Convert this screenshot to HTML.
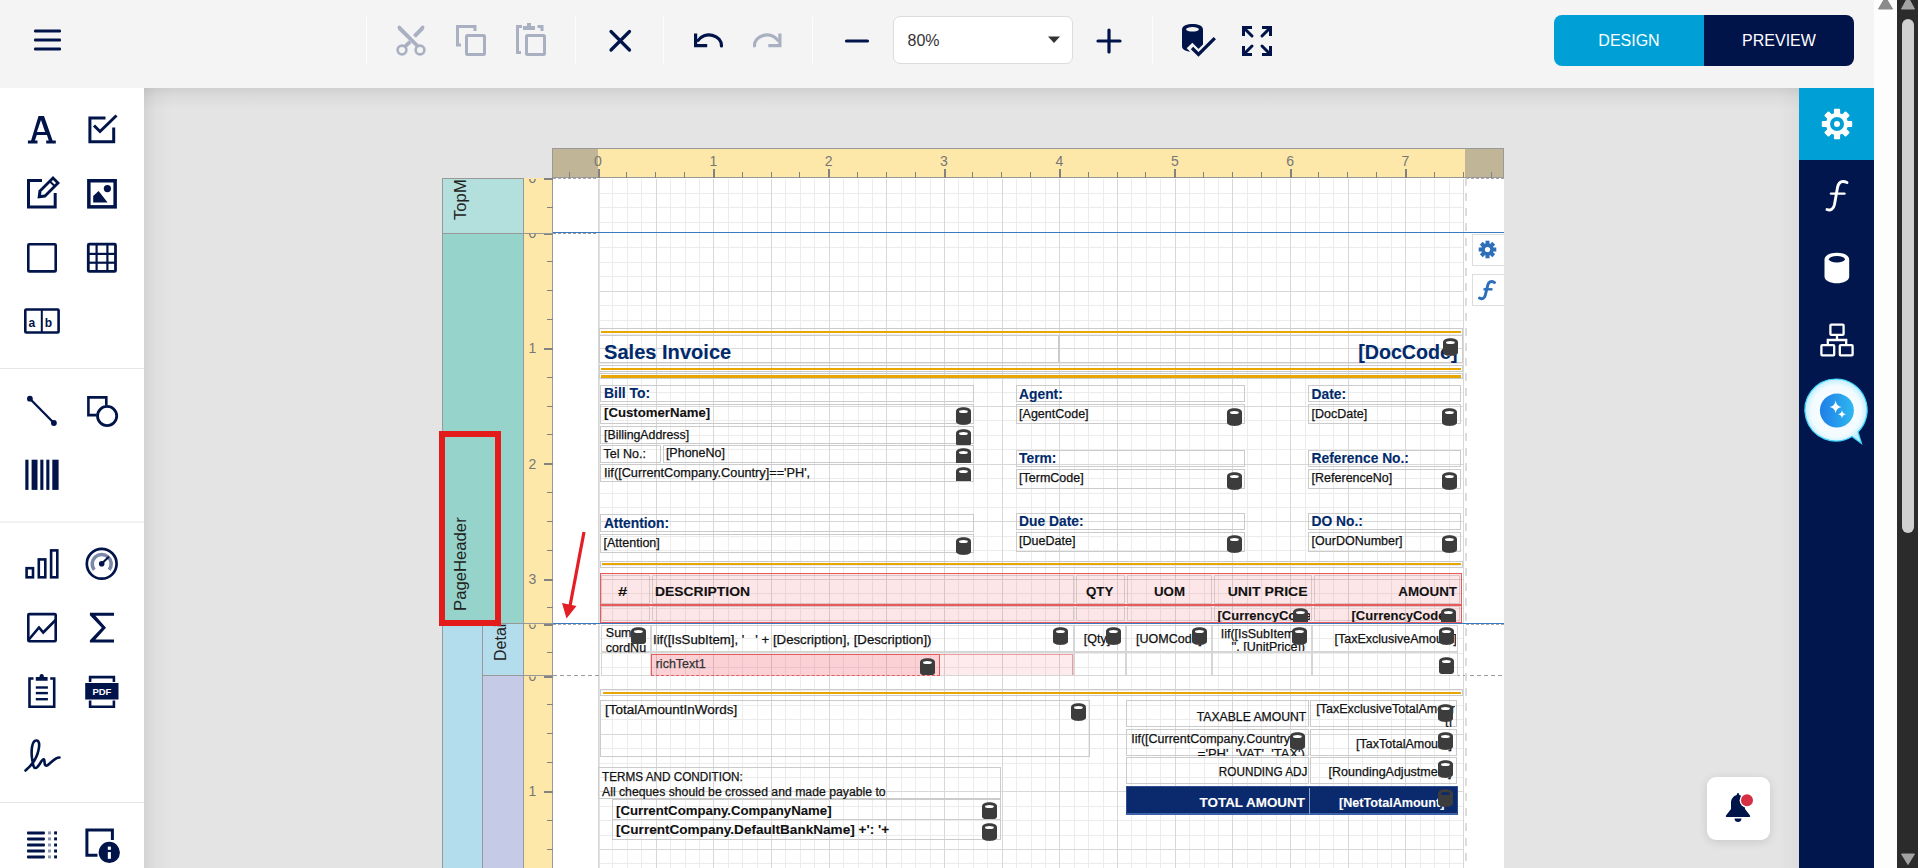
<!DOCTYPE html>
<html><head><meta charset="utf-8">
<style>
*{box-sizing:border-box;margin:0;padding:0}
html,body{width:1918px;height:868px;overflow:hidden;background:#e4e4e4;font-family:"Liberation Sans",sans-serif}
.a{position:absolute}
#tb{left:0;top:0;width:1874px;height:88px;background:#f4f4f4}
#lp{left:0;top:88px;width:144px;height:780px;background:#fff}
#cv{left:144px;top:88px;width:1655px;height:780px;background:#e4e4e4;overflow:hidden}
#rs{left:1799px;top:88px;width:75px;height:780px;background:#00164d}
#sb1{left:1874px;top:0;width:23px;height:868px;background:#fdfdfd}
#sb2{left:1897px;top:0;width:21px;height:868px;background:#2b2b2b}
</style></head><body>
<!-- TOOLBAR -->
<div id="tb" class="a">
 <svg class="a" style="left:0;top:0" width="1874" height="88" viewBox="0 0 1874 88">
  <g fill="#00144a">
   <rect x="34" y="29.5" width="27" height="3" rx="1.2"/>
   <rect x="34" y="38.5" width="27" height="3" rx="1.2"/>
   <rect x="34" y="47.5" width="27" height="3" rx="1.2"/>
  </g>
  <g fill="#fdfdfd">
   <rect x="366" y="17" width="1" height="48"/>
   <rect x="575" y="17" width="1" height="48"/>
   <rect x="663" y="17" width="1" height="48"/>
   <rect x="812" y="17" width="1" height="48"/>
   <rect x="1152" y="17" width="1" height="48"/>
  </g>
  <!-- scissors -->
  <g fill="#a9b0c2">
   <path d="M397.6 26.8 Q398.6 24.8 400.6 26.2 L418.6 44.4 L416 47 L399 30.6 Q397.3 28.8 397.6 26.8 Z"/>
   <path d="M424.4 26.8 Q423.4 24.8 421.4 26.2 L413 34.9 L415.8 37.7 L423 30.6 Q424.7 28.8 424.4 26.8 Z"/>
   <path d="M408.9 40.2 L411.6 42.9 L405.6 48.6 L402.8 45.9 Z"/>
  </g>
  <g stroke="#a9b0c2" stroke-width="2.6" fill="none">
   <circle cx="402" cy="50" r="4.4"/>
   <circle cx="420" cy="50" r="4.4"/>
  </g>
  <!-- copy -->
  <g stroke="#a9b0c2" stroke-width="3" fill="none">
   <path d="M461 45 L457.5 45 L457.5 26.5 L475 26.5 L475 31"/>
   <rect x="466.5" y="35.5" width="18" height="19" rx="1"/>
  </g>
  <!-- paste -->
  <g stroke="#a9b0c2" stroke-width="3" fill="none">
   <path d="M521 52.5 L517.5 52.5 L517.5 26.5 L522 26.5"/>
   <path d="M537.5 26.5 L542 26.5 L542 31"/>
   <rect x="526.5" y="35.5" width="18" height="19" rx="1"/>
  </g>
  <g fill="#a9b0c2"><rect x="523" y="26" width="12" height="4"/><rect x="527" y="23" width="4" height="4"/></g>
  <!-- X -->
  <g stroke="#00144a" stroke-width="3.2" stroke-linecap="round">
   <path d="M611 31.5 L629.5 50 M629.5 31.5 L611 50"/>
  </g>
  <!-- undo -->
  <g stroke="#00144a" stroke-width="3.2" fill="none" stroke-linecap="round">
   <path d="M721.5 46 A12.5 10.5 0 0 0 698 40.5"/>
  </g>
  <g fill="#00144a"><path d="M694 33.5 h3.2 v10.5 h10 v3.3 h-13.2 z"/></g>
  <!-- redo -->
  <g stroke="#a9b0c2" stroke-width="3.2" fill="none" stroke-linecap="round">
   <path d="M754.5 46 A12.5 10.5 0 0 1 778 40.5"/>
  </g>
  <g fill="#a9b0c2"><path d="M781.5 33.5 h-3.2 v10.5 h-10 v3.3 h13.2 z"/></g>
  <!-- minus / plus -->
  <g stroke="#00144a" stroke-width="3.2" stroke-linecap="round">
   <path d="M846.5 41 H867.5"/>
   <path d="M1098 41 H1120 M1109 30 V52"/>
  </g>
  <!-- db check -->
  <path fill="#00144a" d="M1182 29.5 C1182 22.3 1203 22.3 1203 29.5 V46.5 C1203 53.5 1182 53.5 1182 46.5 Z"/>
  <ellipse cx="1192.5" cy="29.3" rx="6.4" ry="2.3" fill="#f4f4f4"/>
  <path d="M1189.5 45.5 L1198.5 54.5 L1216 37" stroke="#f4f4f4" stroke-width="8" fill="none"/>
  <path d="M1192 48 L1198.5 54.5 L1214.8 38.2" stroke="#00144a" stroke-width="3.3" fill="none"/>
  <!-- fullscreen -->
  <g fill="#00144a">
   <path d="M1242 26 h10 v3 h-7 v7 h-3 z"/><path d="M1272 26 h-10 v3 h7 v7 h3 z"/>
   <path d="M1242 56 h10 v-3 h-7 v-7 h-3 z"/><path d="M1272 56 h-10 v-3 h7 v-7 h3 z"/>
  </g>
  <g stroke="#00144a" stroke-width="3" stroke-linecap="round">
   <path d="M1245 29 L1252 36 M1269 29 L1262 36 M1245 53 L1252 46 M1269 53 L1262 46"/>
  </g>
 </svg>
 <div class="a" style="left:893px;top:16px;width:180px;height:48px;background:#fff;border:1px solid #dcdcdc;border-radius:7px"></div>
 <div class="a" style="left:907.5px;top:32px;font-size:16px;color:#333;line-height:18px">80%</div>
 <svg class="a" style="left:1047px;top:36px" width="14" height="8"><path d="M1 0.5 L13 0.5 L7 7 Z" fill="#333"/></svg>
 <div class="a" style="left:1554px;top:15px;width:150px;height:51px;background:#00a0d7;border-radius:8px 0 0 8px;color:#fff;font-size:16px;line-height:51px;text-align:center">DESIGN</div>
 <div class="a" style="left:1704px;top:15px;width:150px;height:51px;background:#00144a;border-radius:0 8px 8px 0;color:#fff;font-size:16px;line-height:51px;text-align:center">PREVIEW</div>
</div>
<!-- LEFT PANEL -->
<div id="lp" class="a">
<svg class="a" style="left:0;top:0" width="144" height="780" viewBox="0 88 144 780">
 <g fill="#e6e6e6"><rect x="0" y="368" width="144" height="1"/><rect x="0" y="521.5" width="144" height="1"/><rect x="0" y="802" width="144" height="1"/></g>
 <!-- A serif -->
 <path fill="#00144a" d="M38.5 116 h5.5 l8.6 24.6 h3.2 v2.8 h-9.6 v-2.8 h2.6 l-1.9 -5.6 h-10.1 l-1.9 5.6 h2.6 v2.8 h-9.6 v-2.8 h3.2 z M36.9 132.1 h8.2 l-4.1 -12.2 z"/>
 <!-- checkbox -->
 <g fill="none" stroke="#00144a" stroke-width="3">
  <path d="M105.5 117.9 H89.9 V141.8 H113.7 V127.5"/>
  <path d="M94 125.5 L100 131.5 L116.5 115.5"/>
 </g>
 <!-- edit -->
 <g fill="none" stroke="#00144a" stroke-width="3">
  <path d="M42 180.5 H28.5 V207.1 H55.2 V193"/>
 </g>
 <path fill="#00144a" d="M53 176 L60 183 L45.5 197.5 L37.5 198.5 L38.5 190.5 Z"/>
 <path fill="#fff" d="M53 180 L56 183 L44.5 194.5 L41 195 L41.5 191.5 Z"/>
 <path fill="#00144a" d="M51 181 L55 185 L53.6 186.4 L49.6 182.4 Z"/>
 <!-- image -->
 <rect x="88.85" y="180.75" width="26.3" height="26.1" fill="none" stroke="#00144a" stroke-width="3.5"/>
 <circle cx="107.4" cy="188.6" r="3.6" fill="#00144a"/>
 <path fill="#00144a" d="M93.2 196 L98.6 191 L107.6 202.6 L93.2 202.6 Z"/>
 <!-- rect -->
 <rect x="28.3" y="244.2" width="27.4" height="27.2" rx="1" fill="none" stroke="#00144a" stroke-width="2.6"/>
 <!-- table -->
 <rect x="88.3" y="244.2" width="27.2" height="27.2" rx="1" fill="none" stroke="#00144a" stroke-width="2.8"/>
 <g fill="#00144a"><rect x="95.5" y="244" width="2.2" height="28"/><rect x="106.3" y="244" width="2.2" height="28"/><rect x="88" y="252.8" width="28" height="2.2"/><rect x="88" y="261.6" width="28" height="2.2"/></g>
 <!-- ab -->
 <rect x="25.3" y="309.5" width="33.3" height="23" rx="1" fill="none" stroke="#00144a" stroke-width="2.6"/>
 <rect x="40.8" y="309" width="2" height="24" fill="#00144a"/>
 <text x="28.6" y="326.5" font-size="12" font-weight="bold" fill="#00144a" font-family="Liberation Sans">a</text>
 <text x="44.8" y="326.5" font-size="12" font-weight="bold" fill="#00144a" font-family="Liberation Sans">b</text>
 <!-- line -->
 <path d="M29.9 398.7 L53.9 423" stroke="#00144a" stroke-width="2.3"/>
 <circle cx="29.9" cy="398.7" r="2.9" fill="#00144a"/><circle cx="53.9" cy="423" r="2.9" fill="#00144a"/>
 <!-- shape -->
 <path d="M96.5 415.1 H88.4 V397.4 H106.3 V405" fill="none" stroke="#00144a" stroke-width="2.6"/>
 <circle cx="107.1" cy="416" r="9.6" fill="none" stroke="#00144a" stroke-width="2.8"/>
 <!-- barcode -->
 <g fill="#00144a"><rect x="25.3" y="459.7" width="3.2" height="30.2"/><rect x="31.6" y="459.7" width="5.9" height="30.2"/><rect x="40.3" y="459.7" width="3.1" height="30.2"/><rect x="46.3" y="459.7" width="3.1" height="30.2"/><rect x="52.3" y="459.7" width="6.3" height="30.2"/></g>
 <!-- chart -->
 <g fill="none" stroke="#00144a" stroke-width="2.6">
  <rect x="26.6" y="568.2" width="6.4" height="9.1"/>
  <rect x="38.8" y="559.4" width="6.5" height="17.9"/>
  <rect x="51.1" y="550.4" width="6.2" height="26.9"/>
 </g>
 <!-- gauge -->
 <circle cx="101.7" cy="563.8" r="14.9" fill="none" stroke="#00144a" stroke-width="2.7"/>
 <path d="M94.2 569.8 A9.5 9.5 0 1 1 109.2 569.8" fill="none" stroke="#7b88a8" stroke-width="3.6"/>
 <path d="M101.7 563.8 L108.8 556.7" stroke="#00144a" stroke-width="2"/>
 <circle cx="101.7" cy="563.8" r="2.8" fill="#00144a"/>
 <!-- sparkline -->
 <rect x="28.3" y="614.1" width="27.4" height="27.2" rx="1" fill="none" stroke="#00144a" stroke-width="2.6"/>
 <path d="M28.5 640 L39 627.5 L43.2 632.5 L55.6 620" fill="none" stroke="#00144a" stroke-width="2.6"/>
 <!-- sigma -->
 <path fill="#00144a" d="M89.9 612.8 H114 V615.8 H95.4 L106 627.7 L95.4 639.6 H114 V642.6 H89.9 V640.2 L101.8 627.7 L89.9 615.2 Z"/>
 <!-- clipboard -->
 <path d="M33.5 678.5 H29.5 V706.8 H54.2 V678.5 H50.2" fill="none" stroke="#00144a" stroke-width="2.6"/>
 <path fill="#00144a" d="M35.8 677 H39.5 Q39.5 674 41.7 674 Q43.9 674 43.9 677 H47.6 V680.8 H35.8 Z"/>
 <g fill="#00144a"><rect x="35.8" y="686.3" width="12.1" height="2.4"/><rect x="35.8" y="691.9" width="12.1" height="2.4"/><rect x="35.8" y="698" width="12.1" height="2.4"/></g>
 <!-- pdf -->
 <g fill="none" stroke="#00144a" stroke-width="2.6">
  <path d="M90.1 682 V677.1 H113.9 V682"/>
  <path d="M90.1 700.6 V706.7 H113.9 V700.6"/>
 </g>
 <rect x="85.2" y="683" width="33.3" height="16.5" fill="#00144a"/>
 <text x="101.9" y="695.4" font-size="9.5" font-weight="bold" fill="#fff" text-anchor="middle" font-family="Liberation Sans">PDF</text>
 <!-- signature -->
 <path d="M25.5 770.5 C32 765 37 758 38.5 750 C40 744 39 740 36 740.5 C32 741 31 750 32 758 C33 764 33 768 35.5 768 C38 768 40 763 42 760.5 C43.5 758.5 44.5 759 44.5 761.5 C44.5 764.5 45 766 47 765.5 C50 764.5 54 757.5 59.5 757.5" fill="none" stroke="#00144a" stroke-width="2.6" stroke-linecap="round"/>
 <!-- list -->
 <g fill="#00144a"><rect x="27" y="831.4" width="17.9" height="3" rx="0.8"/><rect x="27" y="837.4" width="17.9" height="3" rx="0.8"/><rect x="27" y="843.5" width="17.9" height="3" rx="0.8"/><rect x="27" y="849.5" width="17.9" height="3" rx="0.8"/><rect x="27" y="855.4" width="17.9" height="3" rx="0.8"/>
  <rect x="54.1" y="831.4" width="2.9" height="3"/><rect x="54.1" y="837.4" width="2.9" height="3"/><rect x="54.1" y="843.5" width="2.9" height="3"/><rect x="54.1" y="849.5" width="2.9" height="3"/><rect x="54.1" y="855.4" width="2.9" height="3"/></g>
 <g fill="#8f98b3"><rect x="48" y="831.4" width="3" height="3"/><rect x="48" y="837.4" width="3" height="3"/><rect x="48" y="843.5" width="3" height="3"/><rect x="48" y="849.5" width="3" height="3"/><rect x="48" y="855.4" width="3" height="3"/></g>
 <!-- info report -->
 <path d="M97.5 855.3 H86.9 V829.9 H112.4 V840" fill="none" stroke="#00144a" stroke-width="3"/>
 <circle cx="109.3" cy="852.4" r="10.6" fill="#00144a"/>
 <rect x="107.8" y="846.6" width="3.1" height="3.2" fill="#fff"/><rect x="107.8" y="852.1" width="3.1" height="6.7" fill="#fff"/>
</svg>
</div>
<div id="cv" class="a"></div>
<div class="a" style="left:144px;top:88px;width:1655px;height:22px;background:linear-gradient(to bottom,rgba(0,0,0,.085),rgba(0,0,0,.03) 45%,rgba(0,0,0,0))"></div><div class="a" style="left:144px;top:88px;width:28px;height:780px;background:linear-gradient(to right,rgba(0,0,0,.075),rgba(0,0,0,.025) 40%,rgba(0,0,0,0))"></div><div class="a" style="left:1779px;top:88px;width:20px;height:780px;background:linear-gradient(to left,rgba(0,0,0,.03),rgba(0,0,0,0))"></div>
<svg class="a" style="left:0;top:0" width="1918" height="868" viewBox="0 0 1918 868" shape-rendering="crispEdges">
<rect x="442.5" y="178.5" width="81" height="700" fill="#b3dcec" stroke="#999" stroke-width="1"/>
<rect x="443" y="178.5" width="80" height="54.5" fill="#b3e0dc"/>
<rect x="443" y="233" width="80" height="391" fill="#96d3ca"/>
<rect x="483" y="624" width="40" height="52" fill="#b3dcec"/>
<rect x="483" y="676" width="40" height="200" fill="#c5cae6"/>
<path d="M443 233.5 H523 M443 623.5 H523 M483 675.5 H523" stroke="#999" stroke-width="1"/>
<path d="M482.5 624 V868 M523.5 178 V868" stroke="#999" stroke-width="1"/>
<rect x="524" y="178" width="29" height="690" fill="#fde7a9"/>
<path d="M552.5 178 V868" stroke="#999" stroke-width="1"/>
<rect x="553" y="178" width="951" height="690" fill="#fff"/>
<rect x="553" y="148" width="951" height="30" fill="#fde7a9"/>
<rect x="553" y="148" width="45" height="30" fill="#c0b596"/>
<rect x="1465" y="148" width="39" height="30" fill="#c0b596"/>
<path d="M552.5 148 V178 M553 148.5 H1504 M553 177.5 H1504 M1503.5 148 V178" stroke="#999" stroke-width="1"/>
<rect x="569" y="172" width="1" height="6" fill="#828282"/>
<rect x="598" y="169" width="2" height="9" fill="#828282"/>
<rect x="626" y="172" width="1" height="6" fill="#828282"/>
<rect x="655" y="172" width="1" height="6" fill="#828282"/>
<rect x="684" y="172" width="1" height="6" fill="#828282"/>
<rect x="713" y="169" width="2" height="9" fill="#828282"/>
<rect x="742" y="172" width="1" height="6" fill="#828282"/>
<rect x="771" y="172" width="1" height="6" fill="#828282"/>
<rect x="799" y="172" width="1" height="6" fill="#828282"/>
<rect x="828" y="169" width="2" height="9" fill="#828282"/>
<rect x="857" y="172" width="1" height="6" fill="#828282"/>
<rect x="886" y="172" width="1" height="6" fill="#828282"/>
<rect x="915" y="172" width="1" height="6" fill="#828282"/>
<rect x="944" y="169" width="2" height="9" fill="#828282"/>
<rect x="972" y="172" width="1" height="6" fill="#828282"/>
<rect x="1001" y="172" width="1" height="6" fill="#828282"/>
<rect x="1030" y="172" width="1" height="6" fill="#828282"/>
<rect x="1059" y="169" width="2" height="9" fill="#828282"/>
<rect x="1088" y="172" width="1" height="6" fill="#828282"/>
<rect x="1117" y="172" width="1" height="6" fill="#828282"/>
<rect x="1145" y="172" width="1" height="6" fill="#828282"/>
<rect x="1174" y="169" width="2" height="9" fill="#828282"/>
<rect x="1203" y="172" width="1" height="6" fill="#828282"/>
<rect x="1232" y="172" width="1" height="6" fill="#828282"/>
<rect x="1261" y="172" width="1" height="6" fill="#828282"/>
<rect x="1290" y="169" width="2" height="9" fill="#828282"/>
<rect x="1318" y="172" width="1" height="6" fill="#828282"/>
<rect x="1347" y="172" width="1" height="6" fill="#828282"/>
<rect x="1376" y="172" width="1" height="6" fill="#828282"/>
<rect x="1405" y="169" width="2" height="9" fill="#828282"/>
<rect x="1434" y="172" width="1" height="6" fill="#828282"/>
<rect x="1463" y="172" width="1" height="6" fill="#828282"/>
<rect x="1491" y="172" width="1" height="6" fill="#828282"/>
<rect x="598" y="178.5" width="1" height="54.5" fill="#d8d8d8"/>
<rect x="612" y="178.5" width="1" height="54.5" fill="#ececec"/>
<rect x="627" y="178.5" width="1" height="54.5" fill="#ececec"/>
<rect x="641" y="178.5" width="1" height="54.5" fill="#ececec"/>
<rect x="656" y="178.5" width="1" height="54.5" fill="#d8d8d8"/>
<rect x="670" y="178.5" width="1" height="54.5" fill="#ececec"/>
<rect x="685" y="178.5" width="1" height="54.5" fill="#ececec"/>
<rect x="699" y="178.5" width="1" height="54.5" fill="#ececec"/>
<rect x="713" y="178.5" width="1" height="54.5" fill="#d8d8d8"/>
<rect x="728" y="178.5" width="1" height="54.5" fill="#ececec"/>
<rect x="742" y="178.5" width="1" height="54.5" fill="#ececec"/>
<rect x="757" y="178.5" width="1" height="54.5" fill="#ececec"/>
<rect x="771" y="178.5" width="1" height="54.5" fill="#d8d8d8"/>
<rect x="785" y="178.5" width="1" height="54.5" fill="#ececec"/>
<rect x="800" y="178.5" width="1" height="54.5" fill="#ececec"/>
<rect x="814" y="178.5" width="1" height="54.5" fill="#ececec"/>
<rect x="829" y="178.5" width="1" height="54.5" fill="#d8d8d8"/>
<rect x="843" y="178.5" width="1" height="54.5" fill="#ececec"/>
<rect x="858" y="178.5" width="1" height="54.5" fill="#ececec"/>
<rect x="872" y="178.5" width="1" height="54.5" fill="#ececec"/>
<rect x="886" y="178.5" width="1" height="54.5" fill="#d8d8d8"/>
<rect x="901" y="178.5" width="1" height="54.5" fill="#ececec"/>
<rect x="915" y="178.5" width="1" height="54.5" fill="#ececec"/>
<rect x="930" y="178.5" width="1" height="54.5" fill="#ececec"/>
<rect x="944" y="178.5" width="1" height="54.5" fill="#d8d8d8"/>
<rect x="958" y="178.5" width="1" height="54.5" fill="#ececec"/>
<rect x="973" y="178.5" width="1" height="54.5" fill="#ececec"/>
<rect x="987" y="178.5" width="1" height="54.5" fill="#ececec"/>
<rect x="1002" y="178.5" width="1" height="54.5" fill="#d8d8d8"/>
<rect x="1016" y="178.5" width="1" height="54.5" fill="#ececec"/>
<rect x="1031" y="178.5" width="1" height="54.5" fill="#ececec"/>
<rect x="1045" y="178.5" width="1" height="54.5" fill="#ececec"/>
<rect x="1059" y="178.5" width="1" height="54.5" fill="#d8d8d8"/>
<rect x="1074" y="178.5" width="1" height="54.5" fill="#ececec"/>
<rect x="1088" y="178.5" width="1" height="54.5" fill="#ececec"/>
<rect x="1103" y="178.5" width="1" height="54.5" fill="#ececec"/>
<rect x="1117" y="178.5" width="1" height="54.5" fill="#d8d8d8"/>
<rect x="1131" y="178.5" width="1" height="54.5" fill="#ececec"/>
<rect x="1146" y="178.5" width="1" height="54.5" fill="#ececec"/>
<rect x="1160" y="178.5" width="1" height="54.5" fill="#ececec"/>
<rect x="1175" y="178.5" width="1" height="54.5" fill="#d8d8d8"/>
<rect x="1189" y="178.5" width="1" height="54.5" fill="#ececec"/>
<rect x="1204" y="178.5" width="1" height="54.5" fill="#ececec"/>
<rect x="1218" y="178.5" width="1" height="54.5" fill="#ececec"/>
<rect x="1232" y="178.5" width="1" height="54.5" fill="#d8d8d8"/>
<rect x="1247" y="178.5" width="1" height="54.5" fill="#ececec"/>
<rect x="1261" y="178.5" width="1" height="54.5" fill="#ececec"/>
<rect x="1276" y="178.5" width="1" height="54.5" fill="#ececec"/>
<rect x="1290" y="178.5" width="1" height="54.5" fill="#d8d8d8"/>
<rect x="1305" y="178.5" width="1" height="54.5" fill="#ececec"/>
<rect x="1319" y="178.5" width="1" height="54.5" fill="#ececec"/>
<rect x="1333" y="178.5" width="1" height="54.5" fill="#ececec"/>
<rect x="1348" y="178.5" width="1" height="54.5" fill="#d8d8d8"/>
<rect x="1362" y="178.5" width="1" height="54.5" fill="#ececec"/>
<rect x="1377" y="178.5" width="1" height="54.5" fill="#ececec"/>
<rect x="1391" y="178.5" width="1" height="54.5" fill="#ececec"/>
<rect x="1405" y="178.5" width="1" height="54.5" fill="#d8d8d8"/>
<rect x="1420" y="178.5" width="1" height="54.5" fill="#ececec"/>
<rect x="1434" y="178.5" width="1" height="54.5" fill="#ececec"/>
<rect x="1449" y="178.5" width="1" height="54.5" fill="#ececec"/>
<rect x="1463" y="178.5" width="1" height="54.5" fill="#d8d8d8"/>
<rect x="598.0" y="193" width="865.5" height="1" fill="#ececec"/>
<rect x="598.0" y="207" width="865.5" height="1" fill="#ececec"/>
<rect x="598.0" y="222" width="865.5" height="1" fill="#ececec"/>
<rect x="598" y="233" width="1" height="391" fill="#d8d8d8"/>
<rect x="612" y="233" width="1" height="391" fill="#ececec"/>
<rect x="627" y="233" width="1" height="391" fill="#ececec"/>
<rect x="641" y="233" width="1" height="391" fill="#ececec"/>
<rect x="656" y="233" width="1" height="391" fill="#d8d8d8"/>
<rect x="670" y="233" width="1" height="391" fill="#ececec"/>
<rect x="685" y="233" width="1" height="391" fill="#ececec"/>
<rect x="699" y="233" width="1" height="391" fill="#ececec"/>
<rect x="713" y="233" width="1" height="391" fill="#d8d8d8"/>
<rect x="728" y="233" width="1" height="391" fill="#ececec"/>
<rect x="742" y="233" width="1" height="391" fill="#ececec"/>
<rect x="757" y="233" width="1" height="391" fill="#ececec"/>
<rect x="771" y="233" width="1" height="391" fill="#d8d8d8"/>
<rect x="785" y="233" width="1" height="391" fill="#ececec"/>
<rect x="800" y="233" width="1" height="391" fill="#ececec"/>
<rect x="814" y="233" width="1" height="391" fill="#ececec"/>
<rect x="829" y="233" width="1" height="391" fill="#d8d8d8"/>
<rect x="843" y="233" width="1" height="391" fill="#ececec"/>
<rect x="858" y="233" width="1" height="391" fill="#ececec"/>
<rect x="872" y="233" width="1" height="391" fill="#ececec"/>
<rect x="886" y="233" width="1" height="391" fill="#d8d8d8"/>
<rect x="901" y="233" width="1" height="391" fill="#ececec"/>
<rect x="915" y="233" width="1" height="391" fill="#ececec"/>
<rect x="930" y="233" width="1" height="391" fill="#ececec"/>
<rect x="944" y="233" width="1" height="391" fill="#d8d8d8"/>
<rect x="958" y="233" width="1" height="391" fill="#ececec"/>
<rect x="973" y="233" width="1" height="391" fill="#ececec"/>
<rect x="987" y="233" width="1" height="391" fill="#ececec"/>
<rect x="1002" y="233" width="1" height="391" fill="#d8d8d8"/>
<rect x="1016" y="233" width="1" height="391" fill="#ececec"/>
<rect x="1031" y="233" width="1" height="391" fill="#ececec"/>
<rect x="1045" y="233" width="1" height="391" fill="#ececec"/>
<rect x="1059" y="233" width="1" height="391" fill="#d8d8d8"/>
<rect x="1074" y="233" width="1" height="391" fill="#ececec"/>
<rect x="1088" y="233" width="1" height="391" fill="#ececec"/>
<rect x="1103" y="233" width="1" height="391" fill="#ececec"/>
<rect x="1117" y="233" width="1" height="391" fill="#d8d8d8"/>
<rect x="1131" y="233" width="1" height="391" fill="#ececec"/>
<rect x="1146" y="233" width="1" height="391" fill="#ececec"/>
<rect x="1160" y="233" width="1" height="391" fill="#ececec"/>
<rect x="1175" y="233" width="1" height="391" fill="#d8d8d8"/>
<rect x="1189" y="233" width="1" height="391" fill="#ececec"/>
<rect x="1204" y="233" width="1" height="391" fill="#ececec"/>
<rect x="1218" y="233" width="1" height="391" fill="#ececec"/>
<rect x="1232" y="233" width="1" height="391" fill="#d8d8d8"/>
<rect x="1247" y="233" width="1" height="391" fill="#ececec"/>
<rect x="1261" y="233" width="1" height="391" fill="#ececec"/>
<rect x="1276" y="233" width="1" height="391" fill="#ececec"/>
<rect x="1290" y="233" width="1" height="391" fill="#d8d8d8"/>
<rect x="1305" y="233" width="1" height="391" fill="#ececec"/>
<rect x="1319" y="233" width="1" height="391" fill="#ececec"/>
<rect x="1333" y="233" width="1" height="391" fill="#ececec"/>
<rect x="1348" y="233" width="1" height="391" fill="#d8d8d8"/>
<rect x="1362" y="233" width="1" height="391" fill="#ececec"/>
<rect x="1377" y="233" width="1" height="391" fill="#ececec"/>
<rect x="1391" y="233" width="1" height="391" fill="#ececec"/>
<rect x="1405" y="233" width="1" height="391" fill="#d8d8d8"/>
<rect x="1420" y="233" width="1" height="391" fill="#ececec"/>
<rect x="1434" y="233" width="1" height="391" fill="#ececec"/>
<rect x="1449" y="233" width="1" height="391" fill="#ececec"/>
<rect x="1463" y="233" width="1" height="391" fill="#d8d8d8"/>
<rect x="598.0" y="247" width="865.5" height="1" fill="#ececec"/>
<rect x="598.0" y="262" width="865.5" height="1" fill="#ececec"/>
<rect x="598.0" y="276" width="865.5" height="1" fill="#ececec"/>
<rect x="598.0" y="291" width="865.5" height="1" fill="#d8d8d8"/>
<rect x="598.0" y="305" width="865.5" height="1" fill="#ececec"/>
<rect x="598.0" y="320" width="865.5" height="1" fill="#ececec"/>
<rect x="598.0" y="334" width="865.5" height="1" fill="#ececec"/>
<rect x="598.0" y="348" width="865.5" height="1" fill="#d8d8d8"/>
<rect x="598.0" y="363" width="865.5" height="1" fill="#ececec"/>
<rect x="598.0" y="377" width="865.5" height="1" fill="#ececec"/>
<rect x="598.0" y="392" width="865.5" height="1" fill="#ececec"/>
<rect x="598.0" y="406" width="865.5" height="1" fill="#d8d8d8"/>
<rect x="598.0" y="420" width="865.5" height="1" fill="#ececec"/>
<rect x="598.0" y="435" width="865.5" height="1" fill="#ececec"/>
<rect x="598.0" y="449" width="865.5" height="1" fill="#ececec"/>
<rect x="598.0" y="464" width="865.5" height="1" fill="#d8d8d8"/>
<rect x="598.0" y="478" width="865.5" height="1" fill="#ececec"/>
<rect x="598.0" y="493" width="865.5" height="1" fill="#ececec"/>
<rect x="598.0" y="507" width="865.5" height="1" fill="#ececec"/>
<rect x="598.0" y="521" width="865.5" height="1" fill="#d8d8d8"/>
<rect x="598.0" y="536" width="865.5" height="1" fill="#ececec"/>
<rect x="598.0" y="550" width="865.5" height="1" fill="#ececec"/>
<rect x="598.0" y="565" width="865.5" height="1" fill="#ececec"/>
<rect x="598.0" y="579" width="865.5" height="1" fill="#d8d8d8"/>
<rect x="598.0" y="593" width="865.5" height="1" fill="#ececec"/>
<rect x="598.0" y="608" width="865.5" height="1" fill="#ececec"/>
<rect x="598.0" y="622" width="865.5" height="1" fill="#ececec"/>
<rect x="598" y="624" width="1" height="52" fill="#d8d8d8"/>
<rect x="612" y="624" width="1" height="52" fill="#ececec"/>
<rect x="627" y="624" width="1" height="52" fill="#ececec"/>
<rect x="641" y="624" width="1" height="52" fill="#ececec"/>
<rect x="656" y="624" width="1" height="52" fill="#d8d8d8"/>
<rect x="670" y="624" width="1" height="52" fill="#ececec"/>
<rect x="685" y="624" width="1" height="52" fill="#ececec"/>
<rect x="699" y="624" width="1" height="52" fill="#ececec"/>
<rect x="713" y="624" width="1" height="52" fill="#d8d8d8"/>
<rect x="728" y="624" width="1" height="52" fill="#ececec"/>
<rect x="742" y="624" width="1" height="52" fill="#ececec"/>
<rect x="757" y="624" width="1" height="52" fill="#ececec"/>
<rect x="771" y="624" width="1" height="52" fill="#d8d8d8"/>
<rect x="785" y="624" width="1" height="52" fill="#ececec"/>
<rect x="800" y="624" width="1" height="52" fill="#ececec"/>
<rect x="814" y="624" width="1" height="52" fill="#ececec"/>
<rect x="829" y="624" width="1" height="52" fill="#d8d8d8"/>
<rect x="843" y="624" width="1" height="52" fill="#ececec"/>
<rect x="858" y="624" width="1" height="52" fill="#ececec"/>
<rect x="872" y="624" width="1" height="52" fill="#ececec"/>
<rect x="886" y="624" width="1" height="52" fill="#d8d8d8"/>
<rect x="901" y="624" width="1" height="52" fill="#ececec"/>
<rect x="915" y="624" width="1" height="52" fill="#ececec"/>
<rect x="930" y="624" width="1" height="52" fill="#ececec"/>
<rect x="944" y="624" width="1" height="52" fill="#d8d8d8"/>
<rect x="958" y="624" width="1" height="52" fill="#ececec"/>
<rect x="973" y="624" width="1" height="52" fill="#ececec"/>
<rect x="987" y="624" width="1" height="52" fill="#ececec"/>
<rect x="1002" y="624" width="1" height="52" fill="#d8d8d8"/>
<rect x="1016" y="624" width="1" height="52" fill="#ececec"/>
<rect x="1031" y="624" width="1" height="52" fill="#ececec"/>
<rect x="1045" y="624" width="1" height="52" fill="#ececec"/>
<rect x="1059" y="624" width="1" height="52" fill="#d8d8d8"/>
<rect x="1074" y="624" width="1" height="52" fill="#ececec"/>
<rect x="1088" y="624" width="1" height="52" fill="#ececec"/>
<rect x="1103" y="624" width="1" height="52" fill="#ececec"/>
<rect x="1117" y="624" width="1" height="52" fill="#d8d8d8"/>
<rect x="1131" y="624" width="1" height="52" fill="#ececec"/>
<rect x="1146" y="624" width="1" height="52" fill="#ececec"/>
<rect x="1160" y="624" width="1" height="52" fill="#ececec"/>
<rect x="1175" y="624" width="1" height="52" fill="#d8d8d8"/>
<rect x="1189" y="624" width="1" height="52" fill="#ececec"/>
<rect x="1204" y="624" width="1" height="52" fill="#ececec"/>
<rect x="1218" y="624" width="1" height="52" fill="#ececec"/>
<rect x="1232" y="624" width="1" height="52" fill="#d8d8d8"/>
<rect x="1247" y="624" width="1" height="52" fill="#ececec"/>
<rect x="1261" y="624" width="1" height="52" fill="#ececec"/>
<rect x="1276" y="624" width="1" height="52" fill="#ececec"/>
<rect x="1290" y="624" width="1" height="52" fill="#d8d8d8"/>
<rect x="1305" y="624" width="1" height="52" fill="#ececec"/>
<rect x="1319" y="624" width="1" height="52" fill="#ececec"/>
<rect x="1333" y="624" width="1" height="52" fill="#ececec"/>
<rect x="1348" y="624" width="1" height="52" fill="#d8d8d8"/>
<rect x="1362" y="624" width="1" height="52" fill="#ececec"/>
<rect x="1377" y="624" width="1" height="52" fill="#ececec"/>
<rect x="1391" y="624" width="1" height="52" fill="#ececec"/>
<rect x="1405" y="624" width="1" height="52" fill="#d8d8d8"/>
<rect x="1420" y="624" width="1" height="52" fill="#ececec"/>
<rect x="1434" y="624" width="1" height="52" fill="#ececec"/>
<rect x="1449" y="624" width="1" height="52" fill="#ececec"/>
<rect x="1463" y="624" width="1" height="52" fill="#d8d8d8"/>
<rect x="598.0" y="638" width="865.5" height="1" fill="#ececec"/>
<rect x="598.0" y="653" width="865.5" height="1" fill="#ececec"/>
<rect x="598.0" y="667" width="865.5" height="1" fill="#ececec"/>
<rect x="598" y="676" width="1" height="192" fill="#d8d8d8"/>
<rect x="612" y="676" width="1" height="192" fill="#ececec"/>
<rect x="627" y="676" width="1" height="192" fill="#ececec"/>
<rect x="641" y="676" width="1" height="192" fill="#ececec"/>
<rect x="656" y="676" width="1" height="192" fill="#d8d8d8"/>
<rect x="670" y="676" width="1" height="192" fill="#ececec"/>
<rect x="685" y="676" width="1" height="192" fill="#ececec"/>
<rect x="699" y="676" width="1" height="192" fill="#ececec"/>
<rect x="713" y="676" width="1" height="192" fill="#d8d8d8"/>
<rect x="728" y="676" width="1" height="192" fill="#ececec"/>
<rect x="742" y="676" width="1" height="192" fill="#ececec"/>
<rect x="757" y="676" width="1" height="192" fill="#ececec"/>
<rect x="771" y="676" width="1" height="192" fill="#d8d8d8"/>
<rect x="785" y="676" width="1" height="192" fill="#ececec"/>
<rect x="800" y="676" width="1" height="192" fill="#ececec"/>
<rect x="814" y="676" width="1" height="192" fill="#ececec"/>
<rect x="829" y="676" width="1" height="192" fill="#d8d8d8"/>
<rect x="843" y="676" width="1" height="192" fill="#ececec"/>
<rect x="858" y="676" width="1" height="192" fill="#ececec"/>
<rect x="872" y="676" width="1" height="192" fill="#ececec"/>
<rect x="886" y="676" width="1" height="192" fill="#d8d8d8"/>
<rect x="901" y="676" width="1" height="192" fill="#ececec"/>
<rect x="915" y="676" width="1" height="192" fill="#ececec"/>
<rect x="930" y="676" width="1" height="192" fill="#ececec"/>
<rect x="944" y="676" width="1" height="192" fill="#d8d8d8"/>
<rect x="958" y="676" width="1" height="192" fill="#ececec"/>
<rect x="973" y="676" width="1" height="192" fill="#ececec"/>
<rect x="987" y="676" width="1" height="192" fill="#ececec"/>
<rect x="1002" y="676" width="1" height="192" fill="#d8d8d8"/>
<rect x="1016" y="676" width="1" height="192" fill="#ececec"/>
<rect x="1031" y="676" width="1" height="192" fill="#ececec"/>
<rect x="1045" y="676" width="1" height="192" fill="#ececec"/>
<rect x="1059" y="676" width="1" height="192" fill="#d8d8d8"/>
<rect x="1074" y="676" width="1" height="192" fill="#ececec"/>
<rect x="1088" y="676" width="1" height="192" fill="#ececec"/>
<rect x="1103" y="676" width="1" height="192" fill="#ececec"/>
<rect x="1117" y="676" width="1" height="192" fill="#d8d8d8"/>
<rect x="1131" y="676" width="1" height="192" fill="#ececec"/>
<rect x="1146" y="676" width="1" height="192" fill="#ececec"/>
<rect x="1160" y="676" width="1" height="192" fill="#ececec"/>
<rect x="1175" y="676" width="1" height="192" fill="#d8d8d8"/>
<rect x="1189" y="676" width="1" height="192" fill="#ececec"/>
<rect x="1204" y="676" width="1" height="192" fill="#ececec"/>
<rect x="1218" y="676" width="1" height="192" fill="#ececec"/>
<rect x="1232" y="676" width="1" height="192" fill="#d8d8d8"/>
<rect x="1247" y="676" width="1" height="192" fill="#ececec"/>
<rect x="1261" y="676" width="1" height="192" fill="#ececec"/>
<rect x="1276" y="676" width="1" height="192" fill="#ececec"/>
<rect x="1290" y="676" width="1" height="192" fill="#d8d8d8"/>
<rect x="1305" y="676" width="1" height="192" fill="#ececec"/>
<rect x="1319" y="676" width="1" height="192" fill="#ececec"/>
<rect x="1333" y="676" width="1" height="192" fill="#ececec"/>
<rect x="1348" y="676" width="1" height="192" fill="#d8d8d8"/>
<rect x="1362" y="676" width="1" height="192" fill="#ececec"/>
<rect x="1377" y="676" width="1" height="192" fill="#ececec"/>
<rect x="1391" y="676" width="1" height="192" fill="#ececec"/>
<rect x="1405" y="676" width="1" height="192" fill="#d8d8d8"/>
<rect x="1420" y="676" width="1" height="192" fill="#ececec"/>
<rect x="1434" y="676" width="1" height="192" fill="#ececec"/>
<rect x="1449" y="676" width="1" height="192" fill="#ececec"/>
<rect x="1463" y="676" width="1" height="192" fill="#d8d8d8"/>
<rect x="598.0" y="690" width="865.5" height="1" fill="#ececec"/>
<rect x="598.0" y="705" width="865.5" height="1" fill="#ececec"/>
<rect x="598.0" y="719" width="865.5" height="1" fill="#ececec"/>
<rect x="598.0" y="734" width="865.5" height="1" fill="#d8d8d8"/>
<rect x="598.0" y="748" width="865.5" height="1" fill="#ececec"/>
<rect x="598.0" y="763" width="865.5" height="1" fill="#ececec"/>
<rect x="598.0" y="777" width="865.5" height="1" fill="#ececec"/>
<rect x="598.0" y="791" width="865.5" height="1" fill="#d8d8d8"/>
<rect x="598.0" y="806" width="865.5" height="1" fill="#ececec"/>
<rect x="598.0" y="820" width="865.5" height="1" fill="#ececec"/>
<rect x="598.0" y="835" width="865.5" height="1" fill="#ececec"/>
<rect x="598.0" y="849" width="865.5" height="1" fill="#d8d8d8"/>
<rect x="598.0" y="863" width="865.5" height="1" fill="#ececec"/>
<rect x="598" y="178.5" width="1" height="54.5" fill="#d8d8d8"/>
<rect x="656" y="178.5" width="1" height="54.5" fill="#d8d8d8"/>
<rect x="713" y="178.5" width="1" height="54.5" fill="#d8d8d8"/>
<rect x="771" y="178.5" width="1" height="54.5" fill="#d8d8d8"/>
<rect x="829" y="178.5" width="1" height="54.5" fill="#d8d8d8"/>
<rect x="886" y="178.5" width="1" height="54.5" fill="#d8d8d8"/>
<rect x="944" y="178.5" width="1" height="54.5" fill="#d8d8d8"/>
<rect x="1002" y="178.5" width="1" height="54.5" fill="#d8d8d8"/>
<rect x="1059" y="178.5" width="1" height="54.5" fill="#d8d8d8"/>
<rect x="1117" y="178.5" width="1" height="54.5" fill="#d8d8d8"/>
<rect x="1175" y="178.5" width="1" height="54.5" fill="#d8d8d8"/>
<rect x="1232" y="178.5" width="1" height="54.5" fill="#d8d8d8"/>
<rect x="1290" y="178.5" width="1" height="54.5" fill="#d8d8d8"/>
<rect x="1348" y="178.5" width="1" height="54.5" fill="#d8d8d8"/>
<rect x="1405" y="178.5" width="1" height="54.5" fill="#d8d8d8"/>
<rect x="1463" y="178.5" width="1" height="54.5" fill="#d8d8d8"/>
<rect x="598" y="233" width="1" height="391" fill="#d8d8d8"/>
<rect x="656" y="233" width="1" height="391" fill="#d8d8d8"/>
<rect x="713" y="233" width="1" height="391" fill="#d8d8d8"/>
<rect x="771" y="233" width="1" height="391" fill="#d8d8d8"/>
<rect x="829" y="233" width="1" height="391" fill="#d8d8d8"/>
<rect x="886" y="233" width="1" height="391" fill="#d8d8d8"/>
<rect x="944" y="233" width="1" height="391" fill="#d8d8d8"/>
<rect x="1002" y="233" width="1" height="391" fill="#d8d8d8"/>
<rect x="1059" y="233" width="1" height="391" fill="#d8d8d8"/>
<rect x="1117" y="233" width="1" height="391" fill="#d8d8d8"/>
<rect x="1175" y="233" width="1" height="391" fill="#d8d8d8"/>
<rect x="1232" y="233" width="1" height="391" fill="#d8d8d8"/>
<rect x="1290" y="233" width="1" height="391" fill="#d8d8d8"/>
<rect x="1348" y="233" width="1" height="391" fill="#d8d8d8"/>
<rect x="1405" y="233" width="1" height="391" fill="#d8d8d8"/>
<rect x="1463" y="233" width="1" height="391" fill="#d8d8d8"/>
<rect x="598" y="624" width="1" height="52" fill="#d8d8d8"/>
<rect x="656" y="624" width="1" height="52" fill="#d8d8d8"/>
<rect x="713" y="624" width="1" height="52" fill="#d8d8d8"/>
<rect x="771" y="624" width="1" height="52" fill="#d8d8d8"/>
<rect x="829" y="624" width="1" height="52" fill="#d8d8d8"/>
<rect x="886" y="624" width="1" height="52" fill="#d8d8d8"/>
<rect x="944" y="624" width="1" height="52" fill="#d8d8d8"/>
<rect x="1002" y="624" width="1" height="52" fill="#d8d8d8"/>
<rect x="1059" y="624" width="1" height="52" fill="#d8d8d8"/>
<rect x="1117" y="624" width="1" height="52" fill="#d8d8d8"/>
<rect x="1175" y="624" width="1" height="52" fill="#d8d8d8"/>
<rect x="1232" y="624" width="1" height="52" fill="#d8d8d8"/>
<rect x="1290" y="624" width="1" height="52" fill="#d8d8d8"/>
<rect x="1348" y="624" width="1" height="52" fill="#d8d8d8"/>
<rect x="1405" y="624" width="1" height="52" fill="#d8d8d8"/>
<rect x="1463" y="624" width="1" height="52" fill="#d8d8d8"/>
<rect x="598" y="676" width="1" height="192" fill="#d8d8d8"/>
<rect x="656" y="676" width="1" height="192" fill="#d8d8d8"/>
<rect x="713" y="676" width="1" height="192" fill="#d8d8d8"/>
<rect x="771" y="676" width="1" height="192" fill="#d8d8d8"/>
<rect x="829" y="676" width="1" height="192" fill="#d8d8d8"/>
<rect x="886" y="676" width="1" height="192" fill="#d8d8d8"/>
<rect x="944" y="676" width="1" height="192" fill="#d8d8d8"/>
<rect x="1002" y="676" width="1" height="192" fill="#d8d8d8"/>
<rect x="1059" y="676" width="1" height="192" fill="#d8d8d8"/>
<rect x="1117" y="676" width="1" height="192" fill="#d8d8d8"/>
<rect x="1175" y="676" width="1" height="192" fill="#d8d8d8"/>
<rect x="1232" y="676" width="1" height="192" fill="#d8d8d8"/>
<rect x="1290" y="676" width="1" height="192" fill="#d8d8d8"/>
<rect x="1348" y="676" width="1" height="192" fill="#d8d8d8"/>
<rect x="1405" y="676" width="1" height="192" fill="#d8d8d8"/>
<rect x="1463" y="676" width="1" height="192" fill="#d8d8d8"/>
<rect x="544" y="178" width="9" height="2" fill="#828282"/>
<rect x="547" y="207" width="6" height="1" fill="#828282"/>
<rect x="544" y="233" width="9" height="2" fill="#828282"/>
<rect x="547" y="261" width="6" height="1" fill="#828282"/>
<rect x="547" y="290" width="6" height="1" fill="#828282"/>
<rect x="547" y="319" width="6" height="1" fill="#828282"/>
<rect x="544" y="348" width="9" height="2" fill="#828282"/>
<rect x="547" y="377" width="6" height="1" fill="#828282"/>
<rect x="547" y="406" width="6" height="1" fill="#828282"/>
<rect x="547" y="434" width="6" height="1" fill="#828282"/>
<rect x="544" y="463" width="9" height="2" fill="#828282"/>
<rect x="547" y="492" width="6" height="1" fill="#828282"/>
<rect x="547" y="521" width="6" height="1" fill="#828282"/>
<rect x="547" y="550" width="6" height="1" fill="#828282"/>
<rect x="544" y="579" width="9" height="2" fill="#828282"/>
<rect x="547" y="607" width="6" height="1" fill="#828282"/>
<rect x="544" y="624" width="9" height="2" fill="#828282"/>
<rect x="547" y="652" width="6" height="1" fill="#828282"/>
<rect x="544" y="676" width="9" height="2" fill="#828282"/>
<rect x="547" y="704" width="6" height="1" fill="#828282"/>
<rect x="547" y="733" width="6" height="1" fill="#828282"/>
<rect x="547" y="762" width="6" height="1" fill="#828282"/>
<rect x="544" y="791" width="9" height="2" fill="#828282"/>
<rect x="547" y="820" width="6" height="1" fill="#828282"/>
<rect x="547" y="849" width="6" height="1" fill="#828282"/>
<rect x="599" y="178" width="1" height="690" fill="#e2e2e2"/>
<path d="M524 233.5 H553 M524 623.5 H553 M524 675.5 H553" stroke="#999" stroke-width="1"/>
<path d="M553 178.5 H598 M1466 178.5 H1504" stroke="#aaa" stroke-width="1" stroke-dasharray="3 2"/>
<path d="M553 232.5 H1504" stroke="#3a7bbf" stroke-width="1"/>
<path d="M553 233.5 H598" stroke="#999" stroke-width="1" stroke-dasharray="3 2"/>
<path d="M598 623.5 H1466" stroke="#3a7bbf" stroke-width="1"/>
<path d="M553 623.5 H1504" stroke="#3a7bbf" stroke-width="1"/>
<path d="M553 624.5 H598 M1466 624.5 H1504" stroke="#aaa" stroke-width="1" stroke-dasharray="3 2"/>
<path d="M553 675.5 H1504" stroke="#9a9a9a" stroke-width="1" stroke-dasharray="4 3"/>
<path d="M1466 178 V868" stroke="#dcdcdc" stroke-width="2" stroke-dasharray="7.5 7.5"/>
</svg>
<svg class="a" style="left:0;top:0" width="1918" height="868" viewBox="0 0 1918 868"><text x="598.0" y="165.5" font-size="14" fill="#777" text-anchor="middle" font-family="Liberation Sans">0</text>
<text x="713.4" y="165.5" font-size="14" fill="#777" text-anchor="middle" font-family="Liberation Sans">1</text>
<text x="828.7" y="165.5" font-size="14" fill="#777" text-anchor="middle" font-family="Liberation Sans">2</text>
<text x="944.0" y="165.5" font-size="14" fill="#777" text-anchor="middle" font-family="Liberation Sans">3</text>
<text x="1059.4" y="165.5" font-size="14" fill="#777" text-anchor="middle" font-family="Liberation Sans">4</text>
<text x="1174.8" y="165.5" font-size="14" fill="#777" text-anchor="middle" font-family="Liberation Sans">5</text>
<text x="1290.1" y="165.5" font-size="14" fill="#777" text-anchor="middle" font-family="Liberation Sans">6</text>
<text x="1405.4" y="165.5" font-size="14" fill="#777" text-anchor="middle" font-family="Liberation Sans">7</text>
<svg x="524" y="179.0" width="20" height="8" overflow="hidden"><text x="8.5" y="4.2" font-size="14" fill="#777" text-anchor="middle" font-family="Liberation Sans">0</text></svg>
<text x="532.5" y="353.4" font-size="14" fill="#777" text-anchor="middle" font-family="Liberation Sans">1</text>
<text x="532.5" y="468.7" font-size="14" fill="#777" text-anchor="middle" font-family="Liberation Sans">2</text>
<text x="532.5" y="584.0" font-size="14" fill="#777" text-anchor="middle" font-family="Liberation Sans">3</text>
<svg x="524" y="233.5" width="20" height="8" overflow="hidden"><text x="8.5" y="4.2" font-size="14" fill="#777" text-anchor="middle" font-family="Liberation Sans">0</text></svg>
<svg x="524" y="624.5" width="20" height="8" overflow="hidden"><text x="8.5" y="4.2" font-size="14" fill="#777" text-anchor="middle" font-family="Liberation Sans">0</text></svg>
<text x="532.5" y="796.4" font-size="14" fill="#777" text-anchor="middle" font-family="Liberation Sans">1</text>
<svg x="524" y="676.5" width="20" height="8" overflow="hidden"><text x="8.5" y="4.2" font-size="14" fill="#777" text-anchor="middle" font-family="Liberation Sans">0</text></svg></svg>
<div class="a" style="left:443px;top:178.5px;width:80px;height:54.5px;overflow:hidden"><div class="a" style="left:9px;top:41.5px;width:200px;height:18px;font-size:16.7px;line-height:18px;color:#222;transform-origin:0 0;transform:rotate(-90deg)">TopMargin</div></div>
<div class="a" style="left:443px;top:233px;width:80px;height:391px;overflow:hidden"><div class="a" style="left:9px;top:378px;width:200px;height:18px;font-size:16.7px;line-height:18px;color:#222;transform-origin:0 0;transform:rotate(-90deg)">PageHeader</div></div>
<div class="a" style="left:483px;top:624px;width:40px;height:52px;overflow:hidden"><div class="a" style="left:9px;top:37px;width:200px;height:18px;font-size:16px;line-height:18px;color:#222;transform-origin:0 0;transform:rotate(-90deg)">Detail</div></div><div class="a" style="left:599px;top:328px;width:864px;height:8px;border:1px solid #cbcbcb;background:none"></div>
<div class="a" style="left:601px;top:330.8px;width:860px;height:2.3px;background:#e8a600"></div>
<div class="a" style="left:599px;top:335px;width:461px;height:28px;border:1px solid #cbcbcb;background:none"></div>
<div class="a" style="left:1058px;top:335px;width:405px;height:28px;border:1px solid #cbcbcb;background:none"></div>
<div class="a" style="left:603.9px;top:342.5px;transform-origin:0 0;font-size:19.5px;line-height:19.5px;font-weight:bold;color:#002a6b;white-space:pre;-webkit-text-stroke:0.1px #002a6b;transform:scaleX(1.0295)">Sales Invoice</div>
<div class="a" style="left:1359.0px;top:342.5px;transform-origin:100% 0;font-size:19.5px;line-height:19.5px;font-weight:bold;color:#002a6b;white-space:pre;-webkit-text-stroke:0.1px #002a6b;transform:scaleX(1.0084)">[DocCode]</div>
<svg class="a" style="left:1442.6px;top:338px" width="15" height="18" viewBox="0 0 15 18"><path d="M0 4.2 C0 -1.2 15 -1.2 15 4.2 V14.5 C15 19 0 19 0 14.5 Z" fill="#3c3c3c"/><ellipse cx="7.4" cy="4.5" rx="4.4" ry="1.5" fill="#fff"/></svg>
<div class="a" style="left:599px;top:365px;width:864px;height:7px;border:1px solid #cbcbcb;background:none"></div>
<div class="a" style="left:601px;top:367.6px;width:860px;height:2.3px;background:#e8a600"></div>
<div class="a" style="left:599px;top:373px;width:864px;height:6px;border:1px solid #cbcbcb;background:none"></div>
<div class="a" style="left:601px;top:375.3px;width:860px;height:2.3px;background:#e8a600"></div>
<div class="a" style="left:600px;top:385px;width:374px;height:17px;border:1px solid #cbcbcb;background:none"></div>
<div class="a" style="left:603.9px;top:387.3px;transform-origin:0 0;font-size:13.8px;line-height:13.8px;font-weight:bold;color:#002a6b;white-space:pre;-webkit-text-stroke:0.1px #002a6b;transform:scaleX(1.0081)">Bill To:</div>
<div class="a" style="left:600px;top:404px;width:374px;height:20px;border:1px solid #cbcbcb;background:none"></div>
<div class="a" style="left:603.9px;top:407.1px;transform-origin:0 0;font-size:12.6px;line-height:12.6px;font-weight:bold;color:#111;white-space:pre;-webkit-text-stroke:0.1px #111;transform:scaleX(1.0471)">[CustomerName]</div>
<svg class="a" style="left:955.5px;top:407px" width="15" height="18" viewBox="0 0 15 18"><path d="M0 4.2 C0 -1.2 15 -1.2 15 4.2 V14.5 C15 19 0 19 0 14.5 Z" fill="#3c3c3c"/><ellipse cx="7.4" cy="4.5" rx="4.4" ry="1.5" fill="#fff"/></svg>
<div class="a" style="left:600px;top:426px;width:374px;height:18px;border:1px solid #cbcbcb;background:none"></div>
<div class="a" style="left:603.5px;top:429.4px;transform-origin:0 0;font-size:12.5px;line-height:12.5px;font-weight:normal;color:#111;white-space:pre;-webkit-text-stroke:0.25px #111;transform:scaleX(0.9878)">[BillingAddress]</div>
<svg class="a" style="left:955.5px;top:429px" width="15" height="16" viewBox="0 0 15 16"><path d="M0 4.2 C0 -1.2 15 -1.2 15 4.2 V14.5 C15 19 0 19 0 14.5 Z" fill="#3c3c3c"/><ellipse cx="7.4" cy="4.5" rx="4.4" ry="1.5" fill="#fff"/></svg>
<div class="a" style="left:600px;top:445px;width:61px;height:18px;border:1px solid #cbcbcb;background:none"></div>
<div class="a" style="left:603.5px;top:448.2px;transform-origin:0 0;font-size:12.5px;line-height:12.5px;font-weight:normal;color:#111;white-space:pre;-webkit-text-stroke:0.25px #111;transform:scaleX(1.0000)">Tel No.:</div>
<div class="a" style="left:663px;top:445px;width:311px;height:18px;border:1px solid #cbcbcb;background:none"></div>
<div class="a" style="left:665.9px;top:447.0px;transform-origin:0 0;font-size:12.5px;line-height:12.5px;font-weight:normal;color:#111;white-space:pre;-webkit-text-stroke:0.25px #111;transform:scaleX(1.0000)">[PhoneNo]</div>
<svg class="a" style="left:955.5px;top:447.8px" width="15" height="15" viewBox="0 0 15 15"><path d="M0 4.2 C0 -1.2 15 -1.2 15 4.2 V14.5 C15 19 0 19 0 14.5 Z" fill="#3c3c3c"/><ellipse cx="7.4" cy="4.5" rx="4.4" ry="1.5" fill="#fff"/></svg>
<div class="a" style="left:600px;top:464px;width:374px;height:18px;border:1px solid #cbcbcb;background:none"></div>
<div class="a" style="left:603.5px;top:467.0px;transform-origin:0 0;font-size:12.5px;line-height:12.5px;font-weight:normal;color:#111;white-space:pre;-webkit-text-stroke:0.25px #111;transform:scaleX(1.0177)">Iif([CurrentCompany.Country]=='PH',</div>
<svg class="a" style="left:955.5px;top:467.2px" width="15" height="14" viewBox="0 0 15 14"><path d="M0 4.2 C0 -1.2 15 -1.2 15 4.2 V14.5 C15 19 0 19 0 14.5 Z" fill="#3c3c3c"/><ellipse cx="7.4" cy="4.5" rx="4.4" ry="1.5" fill="#fff"/></svg>
<div class="a" style="left:600px;top:514px;width:374px;height:18px;border:1px solid #cbcbcb;background:none"></div>
<div class="a" style="left:603.9px;top:516.8px;transform-origin:0 0;font-size:13.8px;line-height:13.8px;font-weight:bold;color:#002a6b;white-space:pre;-webkit-text-stroke:0.1px #002a6b;transform:scaleX(1.0000)">Attention:</div>
<div class="a" style="left:600px;top:534px;width:374px;height:19px;border:1px solid #cbcbcb;background:none"></div>
<div class="a" style="left:603.5px;top:537.3px;transform-origin:0 0;font-size:12.5px;line-height:12.5px;font-weight:normal;color:#111;white-space:pre;-webkit-text-stroke:0.25px #111;transform:scaleX(1.0000)">[Attention]</div>
<svg class="a" style="left:955.5px;top:536.8px" width="15" height="18" viewBox="0 0 15 18"><path d="M0 4.2 C0 -1.2 15 -1.2 15 4.2 V14.5 C15 19 0 19 0 14.5 Z" fill="#3c3c3c"/><ellipse cx="7.4" cy="4.5" rx="4.4" ry="1.5" fill="#fff"/></svg>
<div class="a" style="left:1016px;top:385px;width:229px;height:17px;border:1px solid #cbcbcb;background:none"></div>
<div class="a" style="left:1016px;top:404px;width:229px;height:20px;border:1px solid #cbcbcb;background:none"></div>
<div class="a" style="left:1019.1px;top:387.5px;transform-origin:0 0;font-size:13.8px;line-height:13.8px;font-weight:bold;color:#002a6b;white-space:pre;-webkit-text-stroke:0.1px #002a6b;transform:scaleX(1.0000)">Agent:</div>
<div class="a" style="left:1019.1px;top:407.8px;transform-origin:0 0;font-size:12.5px;line-height:12.5px;font-weight:normal;color:#111;white-space:pre;-webkit-text-stroke:0.25px #111;transform:scaleX(1.0000)">[AgentCode]</div>
<svg class="a" style="left:1227.3px;top:407.7px" width="15" height="18" viewBox="0 0 15 18"><path d="M0 4.2 C0 -1.2 15 -1.2 15 4.2 V14.5 C15 19 0 19 0 14.5 Z" fill="#3c3c3c"/><ellipse cx="7.4" cy="4.5" rx="4.4" ry="1.5" fill="#fff"/></svg>
<div class="a" style="left:1016px;top:450px;width:229px;height:17px;border:1px solid #cbcbcb;background:none"></div>
<div class="a" style="left:1016px;top:469px;width:229px;height:20px;border:1px solid #cbcbcb;background:none"></div>
<div class="a" style="left:1019.1px;top:452.4px;transform-origin:0 0;font-size:13.8px;line-height:13.8px;font-weight:bold;color:#002a6b;white-space:pre;-webkit-text-stroke:0.1px #002a6b;transform:scaleX(1.0000)">Term:</div>
<div class="a" style="left:1019.1px;top:471.6px;transform-origin:0 0;font-size:12.5px;line-height:12.5px;font-weight:normal;color:#111;white-space:pre;-webkit-text-stroke:0.25px #111;transform:scaleX(1.0000)">[TermCode]</div>
<svg class="a" style="left:1227.3px;top:471.6px" width="15" height="18" viewBox="0 0 15 18"><path d="M0 4.2 C0 -1.2 15 -1.2 15 4.2 V14.5 C15 19 0 19 0 14.5 Z" fill="#3c3c3c"/><ellipse cx="7.4" cy="4.5" rx="4.4" ry="1.5" fill="#fff"/></svg>
<div class="a" style="left:1016px;top:513px;width:229px;height:17px;border:1px solid #cbcbcb;background:none"></div>
<div class="a" style="left:1016px;top:532px;width:229px;height:20px;border:1px solid #cbcbcb;background:none"></div>
<div class="a" style="left:1019.1px;top:514.9px;transform-origin:0 0;font-size:13.8px;line-height:13.8px;font-weight:bold;color:#002a6b;white-space:pre;-webkit-text-stroke:0.1px #002a6b;transform:scaleX(1.0000)">Due Date:</div>
<div class="a" style="left:1019.1px;top:534.6px;transform-origin:0 0;font-size:12.5px;line-height:12.5px;font-weight:normal;color:#111;white-space:pre;-webkit-text-stroke:0.25px #111;transform:scaleX(1.0000)">[DueDate]</div>
<svg class="a" style="left:1227.3px;top:534.6px" width="15" height="18" viewBox="0 0 15 18"><path d="M0 4.2 C0 -1.2 15 -1.2 15 4.2 V14.5 C15 19 0 19 0 14.5 Z" fill="#3c3c3c"/><ellipse cx="7.4" cy="4.5" rx="4.4" ry="1.5" fill="#fff"/></svg>
<div class="a" style="left:1308px;top:385px;width:153px;height:17px;border:1px solid #cbcbcb;background:none"></div>
<div class="a" style="left:1308px;top:404px;width:153px;height:20px;border:1px solid #cbcbcb;background:none"></div>
<div class="a" style="left:1311.6px;top:387.5px;transform-origin:0 0;font-size:13.8px;line-height:13.8px;font-weight:bold;color:#002a6b;white-space:pre;-webkit-text-stroke:0.1px #002a6b;transform:scaleX(1.0000)">Date:</div>
<div class="a" style="left:1311.6px;top:407.8px;transform-origin:0 0;font-size:12.5px;line-height:12.5px;font-weight:normal;color:#111;white-space:pre;-webkit-text-stroke:0.25px #111;transform:scaleX(1.0000)">[DocDate]</div>
<svg class="a" style="left:1442px;top:407.7px" width="15" height="18" viewBox="0 0 15 18"><path d="M0 4.2 C0 -1.2 15 -1.2 15 4.2 V14.5 C15 19 0 19 0 14.5 Z" fill="#3c3c3c"/><ellipse cx="7.4" cy="4.5" rx="4.4" ry="1.5" fill="#fff"/></svg>
<div class="a" style="left:1308px;top:450px;width:153px;height:17px;border:1px solid #cbcbcb;background:none"></div>
<div class="a" style="left:1308px;top:469px;width:153px;height:20px;border:1px solid #cbcbcb;background:none"></div>
<div class="a" style="left:1311.6px;top:452.4px;transform-origin:0 0;font-size:13.8px;line-height:13.8px;font-weight:bold;color:#002a6b;white-space:pre;-webkit-text-stroke:0.1px #002a6b;transform:scaleX(1.0000)">Reference No.:</div>
<div class="a" style="left:1311.6px;top:471.6px;transform-origin:0 0;font-size:12.5px;line-height:12.5px;font-weight:normal;color:#111;white-space:pre;-webkit-text-stroke:0.25px #111;transform:scaleX(1.0000)">[ReferenceNo]</div>
<svg class="a" style="left:1442px;top:471.6px" width="15" height="18" viewBox="0 0 15 18"><path d="M0 4.2 C0 -1.2 15 -1.2 15 4.2 V14.5 C15 19 0 19 0 14.5 Z" fill="#3c3c3c"/><ellipse cx="7.4" cy="4.5" rx="4.4" ry="1.5" fill="#fff"/></svg>
<div class="a" style="left:1308px;top:513px;width:153px;height:17px;border:1px solid #cbcbcb;background:none"></div>
<div class="a" style="left:1308px;top:532px;width:153px;height:20px;border:1px solid #cbcbcb;background:none"></div>
<div class="a" style="left:1311.6px;top:514.9px;transform-origin:0 0;font-size:13.8px;line-height:13.8px;font-weight:bold;color:#002a6b;white-space:pre;-webkit-text-stroke:0.1px #002a6b;transform:scaleX(1.0000)">DO No.:</div>
<div class="a" style="left:1311.6px;top:534.6px;transform-origin:0 0;font-size:12.5px;line-height:12.5px;font-weight:normal;color:#111;white-space:pre;-webkit-text-stroke:0.25px #111;transform:scaleX(1.0000)">[OurDONumber]</div>
<svg class="a" style="left:1442px;top:534.6px" width="15" height="18" viewBox="0 0 15 18"><path d="M0 4.2 C0 -1.2 15 -1.2 15 4.2 V14.5 C15 19 0 19 0 14.5 Z" fill="#3c3c3c"/><ellipse cx="7.4" cy="4.5" rx="4.4" ry="1.5" fill="#fff"/></svg>
<div class="a" style="left:600px;top:561px;width:863px;height:7px;border:1px solid #cbcbcb;background:none"></div>
<div class="a" style="left:602px;top:562.8px;width:859px;height:2.3px;background:#e8a600"></div>
<div class="a" style="left:600px;top:573.5px;width:861px;height:48px;background:rgba(240,60,80,0.13)"></div>
<div class="a" style="left:601px;top:575px;width:49px;height:29px;border:1px solid rgba(120,120,120,0.28);background:none"></div>
<div class="a" style="left:601px;top:606px;width:49px;height:15px;border:1px solid rgba(120,120,120,0.28);background:none"></div>
<div class="a" style="left:652px;top:575px;width:422px;height:29px;border:1px solid rgba(120,120,120,0.28);background:none"></div>
<div class="a" style="left:652px;top:606px;width:422px;height:15px;border:1px solid rgba(120,120,120,0.28);background:none"></div>
<div class="a" style="left:1076px;top:575px;width:49px;height:29px;border:1px solid rgba(120,120,120,0.28);background:none"></div>
<div class="a" style="left:1076px;top:606px;width:49px;height:15px;border:1px solid rgba(120,120,120,0.28);background:none"></div>
<div class="a" style="left:1127px;top:575px;width:85px;height:29px;border:1px solid rgba(120,120,120,0.28);background:none"></div>
<div class="a" style="left:1127px;top:606px;width:85px;height:15px;border:1px solid rgba(120,120,120,0.28);background:none"></div>
<div class="a" style="left:1214px;top:575px;width:98px;height:29px;border:1px solid rgba(120,120,120,0.28);background:none"></div>
<div class="a" style="left:1214px;top:606px;width:98px;height:15px;border:1px solid rgba(120,120,120,0.28);background:none"></div>
<div class="a" style="left:1314px;top:575px;width:146px;height:29px;border:1px solid rgba(120,120,120,0.28);background:none"></div>
<div class="a" style="left:1314px;top:606px;width:146px;height:15px;border:1px solid rgba(120,120,120,0.28);background:none"></div>
<div class="a" style="left:600px;top:573px;width:862px;height:33px;border:1px solid #ea5a5a;background:none"></div>
<div class="a" style="left:600px;top:604px;width:862px;height:19px;border:1px solid #ea5a5a;background:none"></div>
<div class="a" style="left:618.0px;top:585.3px;transform-origin:0 0;font-size:13px;line-height:13px;font-weight:bold;color:#111;white-space:pre;-webkit-text-stroke:0.1px #111;transform:scaleX(1.2726)">#</div>
<div class="a" style="left:655.2px;top:585.3px;transform-origin:0 0;font-size:13px;line-height:13px;font-weight:bold;color:#111;white-space:pre;-webkit-text-stroke:0.1px #111;transform:scaleX(1.0693)">DESCRIPTION</div>
<div class="a" style="left:1086.4px;top:585.3px;transform-origin:0 0;font-size:13px;line-height:13px;font-weight:bold;color:#111;white-space:pre;-webkit-text-stroke:0.1px #111;transform:scaleX(1.0253)">QTY</div>
<div class="a" style="left:1153.7px;top:585.3px;transform-origin:0 0;font-size:13px;line-height:13px;font-weight:bold;color:#111;white-space:pre;-webkit-text-stroke:0.1px #111;transform:scaleX(1.0221)">UOM</div>
<div class="a" style="left:1234.2px;top:585.3px;transform-origin:100% 0;font-size:13px;line-height:13px;font-weight:bold;color:#111;white-space:pre;-webkit-text-stroke:0.1px #111;transform:scaleX(1.0859)">UNIT PRICE</div>
<div class="a" style="left:1399.8px;top:585.3px;transform-origin:100% 0;font-size:13px;line-height:13px;font-weight:bold;color:#111;white-space:pre;-webkit-text-stroke:0.1px #111;transform:scaleX(1.0308)">AMOUNT</div>
<div class="a" style="left:1214px;top:605px;width:96px;height:17px;overflow:hidden"><div class="a" style="left:3.5px;top:3.6px;transform-origin:0 0;font-size:13px;line-height:13px;font-weight:bold;color:#111;white-space:pre;-webkit-text-stroke:0.1px #111;transform:scaleX(1.0000)">[CurrencyCode]</div></div>
<div class="a" style="left:1314px;top:605px;width:145px;height:17px;overflow:hidden"><div class="a" style="left:37.5px;top:3.6px;transform-origin:0 0;font-size:13px;line-height:13px;font-weight:bold;color:#111;white-space:pre;-webkit-text-stroke:0.1px #111;transform:scaleX(1.0000)">[CurrencyCode]</div></div>
<svg class="a" style="left:1293px;top:607.7px" width="15" height="14" viewBox="0 0 15 14"><path d="M0 4.2 C0 -1.2 15 -1.2 15 4.2 V14.5 C15 19 0 19 0 14.5 Z" fill="#3c3c3c"/><ellipse cx="7.4" cy="4.5" rx="4.4" ry="1.5" fill="#fff"/></svg>
<svg class="a" style="left:1441.4px;top:607.7px" width="15" height="14" viewBox="0 0 15 14"><path d="M0 4.2 C0 -1.2 15 -1.2 15 4.2 V14.5 C15 19 0 19 0 14.5 Z" fill="#3c3c3c"/><ellipse cx="7.4" cy="4.5" rx="4.4" ry="1.5" fill="#fff"/></svg>
<div class="a" style="left:601px;top:625px;width:50px;height:27px;border:1px solid #d6d6d6;background:none"></div>
<div class="a" style="left:601px;top:652px;width:50px;height:24px;border:1px solid #d6d6d6;background:none"></div>
<div class="a" style="left:651px;top:625px;width:423px;height:27px;border:1px solid #d6d6d6;background:none"></div>
<div class="a" style="left:651px;top:652px;width:423px;height:24px;border:1px solid #d6d6d6;background:none"></div>
<div class="a" style="left:1074px;top:625px;width:52px;height:27px;border:1px solid #d6d6d6;background:none"></div>
<div class="a" style="left:1074px;top:652px;width:52px;height:24px;border:1px solid #d6d6d6;background:none"></div>
<div class="a" style="left:1126px;top:625px;width:86px;height:27px;border:1px solid #d6d6d6;background:none"></div>
<div class="a" style="left:1126px;top:652px;width:86px;height:24px;border:1px solid #d6d6d6;background:none"></div>
<div class="a" style="left:1212px;top:625px;width:100px;height:27px;border:1px solid #d6d6d6;background:none"></div>
<div class="a" style="left:1212px;top:652px;width:100px;height:24px;border:1px solid #d6d6d6;background:none"></div>
<div class="a" style="left:1312px;top:625px;width:146px;height:27px;border:1px solid #d6d6d6;background:none"></div>
<div class="a" style="left:1312px;top:652px;width:146px;height:24px;border:1px solid #d6d6d6;background:none"></div>
<div class="a" style="left:651px;top:653.8px;width:422px;height:21.5px;background:rgba(240,60,80,0.10);border:1px solid rgba(234,90,90,0.55);border-bottom:none"></div>
<div class="a" style="left:651px;top:654px;width:289px;height:21.5px;background:rgba(240,60,80,0.14);border:1.5px solid #ea5a5a;border-bottom:1px dashed #ea5a5a"></div>
<div class="a" style="left:655.7px;top:658.0px;transform-origin:0 0;font-size:12.5px;line-height:12.5px;font-weight:normal;color:#333;white-space:pre;-webkit-text-stroke:0.25px #333;transform:scaleX(1.0000)">richText1</div>
<svg class="a" style="left:919.5px;top:658px" width="15" height="17" viewBox="0 0 15 17"><path d="M0 4.2 C0 -1.2 15 -1.2 15 4.2 V14.5 C15 19 0 19 0 14.5 Z" fill="#3c3c3c"/><ellipse cx="7.4" cy="4.5" rx="4.4" ry="1.5" fill="#fff"/></svg>
<div class="a" style="left:602px;top:626px;width:47px;height:25px;overflow:hidden"><div class="a" style="left:3.8px;top:1.3px;transform-origin:0 0;font-size:12.5px;line-height:12.5px;font-weight:normal;color:#111;white-space:pre;-webkit-text-stroke:0.25px #111;transform:scaleX(1.0000)">Sum</div></div>
<div class="a" style="left:602px;top:626px;width:47px;height:28px;overflow:hidden"><div class="a" style="left:3.8px;top:15.5px;transform-origin:0 0;font-size:12.5px;line-height:12.5px;font-weight:normal;color:#111;white-space:pre;-webkit-text-stroke:0.25px #111;transform:scaleX(1.0000)">cordNu</div></div>
<svg class="a" style="left:630.5px;top:627px" width="15" height="17" viewBox="0 0 15 17"><path d="M0 4.2 C0 -1.2 15 -1.2 15 4.2 V14.5 C15 19 0 19 0 14.5 Z" fill="#3c3c3c"/><ellipse cx="7.4" cy="4.5" rx="4.4" ry="1.5" fill="#fff"/></svg>
<div class="a" style="left:653.0px;top:633.9px;transform-origin:0 0;font-size:12.5px;line-height:12.5px;font-weight:normal;color:#111;white-space:pre;-webkit-text-stroke:0.25px #111;transform:scaleX(1.0568)">Iif([IsSubItem],&nbsp;'&nbsp;&nbsp;&nbsp;'&nbsp;+&nbsp;[Description],&nbsp;[Description])</div>
<svg class="a" style="left:1053.2px;top:627.1px" width="15" height="18" viewBox="0 0 15 18"><path d="M0 4.2 C0 -1.2 15 -1.2 15 4.2 V14.5 C15 19 0 19 0 14.5 Z" fill="#3c3c3c"/><ellipse cx="7.4" cy="4.5" rx="4.4" ry="1.5" fill="#fff"/></svg>
<div class="a" style="left:1075px;top:626px;width:49px;height:25px;overflow:hidden"><div class="a" style="left:8.8px;top:7.0px;transform-origin:0 0;font-size:12.5px;line-height:12.5px;font-weight:normal;color:#111;white-space:pre;-webkit-text-stroke:0.25px #111;transform:scaleX(1.0000)">[Qty]</div></div>
<svg class="a" style="left:1106.4px;top:627.1px" width="15" height="18" viewBox="0 0 15 18"><path d="M0 4.2 C0 -1.2 15 -1.2 15 4.2 V14.5 C15 19 0 19 0 14.5 Z" fill="#3c3c3c"/><ellipse cx="7.4" cy="4.5" rx="4.4" ry="1.5" fill="#fff"/></svg>
<div class="a" style="left:1126px;top:626px;width:84px;height:25px;overflow:hidden"><div class="a" style="left:10.1px;top:7.0px;transform-origin:0 0;font-size:12.5px;line-height:12.5px;font-weight:normal;color:#111;white-space:pre;-webkit-text-stroke:0.25px #111;transform:scaleX(1.0000)">[UOMCode]</div></div>
<svg class="a" style="left:1192px;top:627.1px" width="15" height="18" viewBox="0 0 15 18"><path d="M0 4.2 C0 -1.2 15 -1.2 15 4.2 V14.5 C15 19 0 19 0 14.5 Z" fill="#3c3c3c"/><ellipse cx="7.4" cy="4.5" rx="4.4" ry="1.5" fill="#fff"/></svg>
<div class="a" style="left:1213px;top:626px;width:97px;height:25px;overflow:hidden"><div class="a" style="left:7.7px;top:1.7px;transform-origin:0 0;font-size:12.5px;line-height:12.5px;font-weight:normal;color:#111;white-space:pre;-webkit-text-stroke:0.25px #111;transform:scaleX(1.0000)">Iif([IsSubItem],</div></div>
<div class="a" style="left:1213px;top:626px;width:97px;height:25px;overflow:hidden"><div class="a" style="left:18.5px;top:15.4px;transform-origin:100% 0;font-size:12.5px;line-height:12.5px;font-weight:normal;color:#111;white-space:pre;-webkit-text-stroke:0.25px #111;transform:scaleX(1.0000)">'', [UnitPrice])</div></div>
<svg class="a" style="left:1292px;top:627.1px" width="15" height="18" viewBox="0 0 15 18"><path d="M0 4.2 C0 -1.2 15 -1.2 15 4.2 V14.5 C15 19 0 19 0 14.5 Z" fill="#3c3c3c"/><ellipse cx="7.4" cy="4.5" rx="4.4" ry="1.5" fill="#fff"/></svg>
<div class="a" style="left:1312px;top:626px;width:144px;height:25px;overflow:hidden"><div class="a" style="left:22.5px;top:7.0px;transform-origin:0 0;font-size:12.5px;line-height:12.5px;font-weight:normal;color:#111;white-space:pre;-webkit-text-stroke:0.25px #111;transform:scaleX(1.0000)">[TaxExclusiveAmount]</div></div>
<svg class="a" style="left:1439.2px;top:627.1px" width="15" height="18" viewBox="0 0 15 18"><path d="M0 4.2 C0 -1.2 15 -1.2 15 4.2 V14.5 C15 19 0 19 0 14.5 Z" fill="#3c3c3c"/><ellipse cx="7.4" cy="4.5" rx="4.4" ry="1.5" fill="#fff"/></svg>
<svg class="a" style="left:1439.2px;top:656.9px" width="15" height="17.5" viewBox="0 0 15 17.5"><path d="M0 4.2 C0 -1.2 15 -1.2 15 4.2 V14.5 C15 19 0 19 0 14.5 Z" fill="#3c3c3c"/><ellipse cx="7.4" cy="4.5" rx="4.4" ry="1.5" fill="#fff"/></svg>
<div class="a" style="left:600px;top:689px;width:863px;height:7px;border:1px solid #cbcbcb;background:none"></div>
<div class="a" style="left:602.5px;top:691.6px;width:858.8px;height:2.3px;background:#e8a600"></div>
<div class="a" style="left:600px;top:700px;width:490px;height:57px;border:1px solid #cbcbcb;background:none"></div>
<div class="a" style="left:604.9px;top:704.4px;transform-origin:0 0;font-size:12.5px;line-height:12.5px;font-weight:normal;color:#111;white-space:pre;-webkit-text-stroke:0.25px #111;transform:scaleX(1.0771)">[TotalAmountInWords]</div>
<svg class="a" style="left:1070.5px;top:703px" width="15" height="18" viewBox="0 0 15 18"><path d="M0 4.2 C0 -1.2 15 -1.2 15 4.2 V14.5 C15 19 0 19 0 14.5 Z" fill="#3c3c3c"/><ellipse cx="7.4" cy="4.5" rx="4.4" ry="1.5" fill="#fff"/></svg>
<div class="a" style="left:598px;top:767px;width:403px;height:32px;border:1px solid #cbcbcb;background:none"></div>
<div class="a" style="left:602.0px;top:771.2px;transform-origin:0 0;font-size:12.5px;line-height:12.5px;font-weight:normal;color:#111;white-space:pre;-webkit-text-stroke:0.25px #111;transform:scaleX(0.9386)">TERMS AND CONDITION:</div>
<div class="a" style="left:602.0px;top:785.9px;transform-origin:0 0;font-size:12.5px;line-height:12.5px;font-weight:normal;color:#111;white-space:pre;-webkit-text-stroke:0.25px #111;transform:scaleX(0.9788)">All cheques should be crossed and made payable to</div>
<div class="a" style="left:612px;top:799px;width:389px;height:21px;border:1px solid #cbcbcb;background:none"></div>
<div class="a" style="left:616.3px;top:804.6px;transform-origin:0 0;font-size:12.6px;line-height:12.6px;font-weight:bold;color:#111;white-space:pre;-webkit-text-stroke:0.1px #111;transform:scaleX(1.0492)">[CurrentCompany.CompanyName]</div>
<svg class="a" style="left:981.5px;top:802.2px" width="15" height="18" viewBox="0 0 15 18"><path d="M0 4.2 C0 -1.2 15 -1.2 15 4.2 V14.5 C15 19 0 19 0 14.5 Z" fill="#3c3c3c"/><ellipse cx="7.4" cy="4.5" rx="4.4" ry="1.5" fill="#fff"/></svg>
<div class="a" style="left:612px;top:819px;width:389px;height:21px;border:1px solid #cbcbcb;background:none"></div>
<div class="a" style="left:616.3px;top:823.7px;transform-origin:0 0;font-size:12.6px;line-height:12.6px;font-weight:bold;color:#111;white-space:pre;-webkit-text-stroke:0.1px #111;transform:scaleX(1.0773)">[CurrentCompany.DefaultBankName] +': '+</div>
<svg class="a" style="left:981.5px;top:822.8px" width="15" height="18" viewBox="0 0 15 18"><path d="M0 4.2 C0 -1.2 15 -1.2 15 4.2 V14.5 C15 19 0 19 0 14.5 Z" fill="#3c3c3c"/><ellipse cx="7.4" cy="4.5" rx="4.4" ry="1.5" fill="#fff"/></svg>
<div class="a" style="left:1126px;top:700px;width:183px;height:27px;border:1px solid #cbcbcb;background:none"></div>
<div class="a" style="left:1310px;top:700px;width:147px;height:27px;border:1px solid #cbcbcb;background:none"></div>
<div class="a" style="left:1126px;top:729px;width:183px;height:27px;border:1px solid #cbcbcb;background:none"></div>
<div class="a" style="left:1310px;top:729px;width:147px;height:27px;border:1px solid #cbcbcb;background:none"></div>
<div class="a" style="left:1126px;top:757px;width:183px;height:27px;border:1px solid #cbcbcb;background:none"></div>
<div class="a" style="left:1310px;top:757px;width:147px;height:27px;border:1px solid #cbcbcb;background:none"></div>
<div class="a" style="left:1193.6px;top:710.6px;transform-origin:100% 0;font-size:12.5px;line-height:12.5px;font-weight:normal;color:#111;white-space:pre;-webkit-text-stroke:0.25px #111;transform:scaleX(0.9751)">TAXABLE AMOUNT</div>
<div class="a" style="left:1311px;top:701px;width:144px;height:25px;overflow:hidden"><div class="a" style="left:5.3px;top:2.3px;transform-origin:0 0;font-size:12.5px;line-height:12.5px;font-weight:normal;color:#111;white-space:pre;-webkit-text-stroke:0.25px #111;transform:scaleX(1.0000)">[TaxExclusiveTotalAmount</div></div>
<div class="a" style="left:1311px;top:701px;width:144px;height:26px;overflow:hidden"><div class="a" style="left:134.1px;top:16.4px;transform-origin:100% 0;font-size:12.5px;line-height:12.5px;font-weight:normal;color:#111;white-space:pre;-webkit-text-stroke:0.25px #111;transform:scaleX(1.0000)">t]</div></div>
<svg class="a" style="left:1437.5px;top:703.5px" width="15" height="18" viewBox="0 0 15 18"><path d="M0 4.2 C0 -1.2 15 -1.2 15 4.2 V14.5 C15 19 0 19 0 14.5 Z" fill="#3c3c3c"/><ellipse cx="7.4" cy="4.5" rx="4.4" ry="1.5" fill="#fff"/></svg>
<div class="a" style="left:1128px;top:730px;width:179px;height:25px;overflow:hidden"><div class="a" style="left:3.2px;top:2.5px;transform-origin:0 0;font-size:12.5px;line-height:12.5px;font-weight:normal;color:#111;white-space:pre;-webkit-text-stroke:0.25px #111;transform:scaleX(1.0000)">Iif([CurrentCompany.Country</div></div>
<div class="a" style="left:1128px;top:730px;width:179px;height:26px;overflow:hidden"><div class="a" style="left:74.1px;top:17.9px;transform-origin:100% 0;font-size:12.5px;line-height:12.5px;font-weight:normal;color:#111;white-space:pre;-webkit-text-stroke:0.25px #111;transform:scaleX(1.0401)">='PH', 'VAT', 'TAX')</div></div>
<svg class="a" style="left:1290.2px;top:732.1px" width="15" height="18" viewBox="0 0 15 18"><path d="M0 4.2 C0 -1.2 15 -1.2 15 4.2 V14.5 C15 19 0 19 0 14.5 Z" fill="#3c3c3c"/><ellipse cx="7.4" cy="4.5" rx="4.4" ry="1.5" fill="#fff"/></svg>
<div class="a" style="left:1311px;top:730px;width:144px;height:25px;overflow:hidden"><div class="a" style="left:45.1px;top:7.7px;transform-origin:100% 0;font-size:12.5px;line-height:12.5px;font-weight:normal;color:#111;white-space:pre;-webkit-text-stroke:0.25px #111;transform:scaleX(1.0000)">[TaxTotalAmount]</div></div>
<svg class="a" style="left:1437.5px;top:732.1px" width="15" height="18" viewBox="0 0 15 18"><path d="M0 4.2 C0 -1.2 15 -1.2 15 4.2 V14.5 C15 19 0 19 0 14.5 Z" fill="#3c3c3c"/><ellipse cx="7.4" cy="4.5" rx="4.4" ry="1.5" fill="#fff"/></svg>
<div class="a" style="left:1212.7px;top:766.4px;transform-origin:100% 0;font-size:12.5px;line-height:12.5px;font-weight:normal;color:#111;white-space:pre;-webkit-text-stroke:0.25px #111;transform:scaleX(0.9380)">ROUNDING ADJ</div>
<div class="a" style="left:1311px;top:758px;width:144px;height:25px;overflow:hidden"><div class="a" style="left:17.6px;top:8.4px;transform-origin:0 0;font-size:12.5px;line-height:12.5px;font-weight:normal;color:#111;white-space:pre;-webkit-text-stroke:0.25px #111;transform:scaleX(1.0000)">[RoundingAdjustment]</div></div>
<svg class="a" style="left:1437.5px;top:760.3px" width="15" height="18" viewBox="0 0 15 18"><path d="M0 4.2 C0 -1.2 15 -1.2 15 4.2 V14.5 C15 19 0 19 0 14.5 Z" fill="#3c3c3c"/><ellipse cx="7.4" cy="4.5" rx="4.4" ry="1.5" fill="#fff"/></svg>
<div class="a" style="left:1126px;top:786px;width:332px;height:29px;background:#0b2a6e;border:1px solid #2d4f8f;border-bottom:2px solid #3d62a8"></div>
<div class="a" style="left:1309px;top:787.5px;width:1px;height:26px;background:#8aa0c8"></div>
<div class="a" style="left:1206.2px;top:796.5px;transform-origin:100% 0;font-size:12.6px;line-height:12.6px;font-weight:bold;color:#fff;white-space:pre;-webkit-text-stroke:0.1px #fff;transform:scaleX(1.0645)">TOTAL AMOUNT</div>
<div class="a" style="left:1311px;top:788px;width:144px;height:25px;overflow:hidden"><div class="a" style="left:28.0px;top:8.5px;transform-origin:0 0;font-size:12.6px;line-height:12.6px;font-weight:bold;color:#fff;white-space:pre;-webkit-text-stroke:0.1px #fff;transform:scaleX(1.0000)">[NetTotalAmount]</div></div>
<svg class="a" style="left:1437.5px;top:789px" width="15" height="18" viewBox="0 0 15 18"><path d="M0 4.2 C0 -1.2 15 -1.2 15 4.2 V14.5 C15 19 0 19 0 14.5 Z" fill="#3c3c3c"/><ellipse cx="7.4" cy="4.5" rx="4.4" ry="1.5" fill="#0b2a6e"/></svg>
<div class="a" style="left:1471.5px;top:233.5px;width:32px;height:32px;background:#fff;border:1px solid #ddd;border-right:none"></div>
<svg class="a" style="left:1477px;top:239px" width="21" height="21" viewBox="-10.5 -10.5 21 21"><g fill="#2d6fb8"><circle r="6.2"/><rect x="-2" y="-8.8" width="4" height="3.5"/><rect x="-2" y="-8.8" width="4" height="3.5" transform="rotate(45)"/><rect x="-2" y="-8.8" width="4" height="3.5" transform="rotate(90)"/><rect x="-2" y="-8.8" width="4" height="3.5" transform="rotate(135)"/><rect x="-2" y="-8.8" width="4" height="3.5" transform="rotate(180)"/><rect x="-2" y="-8.8" width="4" height="3.5" transform="rotate(225)"/><rect x="-2" y="-8.8" width="4" height="3.5" transform="rotate(270)"/><rect x="-2" y="-8.8" width="4" height="3.5" transform="rotate(315)"/></g><circle r="2.6" fill="#fff"/></svg>
<div class="a" style="left:1471.5px;top:274.3px;width:32px;height:32px;background:#fff;border:1px solid #ddd;border-right:none"></div>
<svg class="a" style="left:1477px;top:279px" width="21" height="22" viewBox="0 0 21 22"><path d="M17.5 3.5 C14 1.5 11.5 3 10.8 6 L8.2 16.5 C7.5 19.5 5 20.5 2.5 19" fill="none" stroke="#2d6fb8" stroke-width="3" stroke-linecap="round"/><path d="M6.5 10.3 H15.5" stroke="#2d6fb8" stroke-width="2.4"/></svg>

<div class="a" style="left:439px;top:431px;width:62px;height:194.5px;border:6px solid #e31b1b"></div>
<svg class="a" style="left:550px;top:525px" width="50" height="100" viewBox="550 525 50 100"><path d="M584 532 L570 606" stroke="#e31e24" stroke-width="3.2"/><path d="M562 603 L576.5 606 L566.5 618.5 Z" fill="#e31e24"/></svg>
<div class="a" style="left:1706.5px;top:777px;width:63px;height:63px;background:#fff;border-radius:9px;box-shadow:0 2px 10px rgba(0,0,0,0.12)"></div>
<svg class="a" style="left:1722px;top:790px" width="32" height="34" viewBox="0 0 32 34"><path fill="#00144a" d="M16 3 C17 3 17.3 4 17.2 5 C21 6 23 9 23 13 L23 19 L28 25.5 C28.5 26.3 28 27 27.2 27 H4.8 C4 27 3.5 26.3 4 25.5 L9 19 L9 13 C9 9 11 6 14.8 5 C14.7 4 15 3 16 3 Z"/><path fill="#00144a" d="M12.5 28.5 H19.5 C19.5 31 17.8 32 16 32 C14.2 32 12.5 31 12.5 28.5 Z"/><circle cx="25" cy="10.3" r="7.4" fill="#fff"/><circle cx="25" cy="10.3" r="6" fill="#d62f44"/></svg>
<!-- RIGHT SIDEBAR -->
<div id="rs" class="a">
<svg class="a" style="left:0;top:0" width="75" height="780" viewBox="1799 88 75 780">
 <defs>
  <radialGradient id="aig" cx="0.5" cy="0.5" r="0.5"><stop offset="0" stop-color="#ffffff"/><stop offset="0.8" stop-color="#f2fbff"/><stop offset="1" stop-color="#bfefff"/></radialGradient>
  <linearGradient id="aib" x1="0" y1="0" x2="1" y2="0"><stop offset="0" stop-color="#1e7fe8"/><stop offset="1" stop-color="#2fb8f0"/></linearGradient>
 </defs>
 <rect x="1799" y="88" width="75" height="72" fill="#00a0d7"/>
 <!-- gear -->
 <g transform="translate(1837 124)" fill="#fff">
  <circle r="11"/>
  <rect x="-3.1" y="-15.2" width="6.2" height="6" rx="1" transform="rotate(0)"/><rect x="-3.1" y="-15.2" width="6.2" height="6" rx="1" transform="rotate(45)"/><rect x="-3.1" y="-15.2" width="6.2" height="6" rx="1" transform="rotate(90)"/><rect x="-3.1" y="-15.2" width="6.2" height="6" rx="1" transform="rotate(135)"/><rect x="-3.1" y="-15.2" width="6.2" height="6" rx="1" transform="rotate(180)"/><rect x="-3.1" y="-15.2" width="6.2" height="6" rx="1" transform="rotate(225)"/><rect x="-3.1" y="-15.2" width="6.2" height="6" rx="1" transform="rotate(270)"/><rect x="-3.1" y="-15.2" width="6.2" height="6" rx="1" transform="rotate(315)"/>
  <circle r="7" fill="#00a0d7"/>
  <circle r="3" fill="#fff"/>
 </g>
 <!-- f -->
 <path d="M1847 182.5 C1842 180 1838.5 182 1837.5 187.5 L1834.5 204.5 C1833.5 209 1830.5 211 1827 209.5" fill="none" stroke="#fff" stroke-width="2.9" stroke-linecap="round"/>
 <path d="M1831 193.6 H1844.5" stroke="#fff" stroke-width="2.4" stroke-linecap="round"/>
 <!-- db -->
 <path fill="#fff" d="M1824.5 259.5 C1824.5 250.5 1849.2 250.5 1849.2 259.5 V276.5 C1849.2 285.5 1824.5 285.5 1824.5 276.5 Z"/>
 <ellipse cx="1836.9" cy="259.3" rx="8" ry="3.2" fill="#00164d"/>
 <!-- network -->
 <g fill="none" stroke="#fff" stroke-width="2.3">
  <rect x="1830.4" y="324.7" width="13.2" height="10.1" rx="0.8"/>
  <rect x="1821.4" y="345.2" width="12.8" height="10.2" rx="0.8"/>
  <rect x="1839.8" y="345.2" width="12.8" height="10.2" rx="0.8"/>
  <path d="M1837 335 V340 M1827.8 344.5 V340 H1846.2 V344.5"/>
 </g>
 <!-- AI bubble -->
 <path d="M1836 379 A31 31 0 1 0 1852 436.5 L1861.5 443.5 L1858 432 A31 31 0 0 0 1836 379 Z" fill="url(#aig)" stroke="#3fd4ff" stroke-width="1.2"/>
 <circle cx="1836.9" cy="410.6" r="17" fill="url(#aib)"/>
 <path fill="#fff" d="M1835.6 400.6 Q1836.3 406.2 1841.6 406.9 Q1836.3 407.6 1835.6 413.2 Q1834.9 407.6 1829.6 406.9 Q1834.9 406.2 1835.6 400.6 Z"/>
 <path fill="#fff" d="M1842 410 Q1842.5 413.7 1846 414.2 Q1842.5 414.7 1842 418.4 Q1841.5 414.7 1838 414.2 Q1841.5 413.7 1842 410 Z"/>
</svg>
</div>
<div id="sb1" class="a">
 <svg class="a" style="left:0;top:0" width="23" height="20"><path d="M4.5 9 L18.5 9 L11.5 -3 Z" fill="#8a8a8a" stroke="#8a8a8a" stroke-width="1" stroke-linejoin="round"/></svg>
</div>
<div id="sb2" class="a">
 <svg class="a" style="left:0;top:0" width="21" height="868">
  <path d="M4.5 9 L17.5 9 L11 -3 Z" fill="#a3a3a3" stroke="#a3a3a3" stroke-width="1" stroke-linejoin="round"/>
  <rect x="5" y="19" width="12" height="514" rx="6" fill="#d0d0d0"/>
  <path d="M4.5 854 L17.5 854 L11 864.5 Z" fill="#a3a3a3" stroke="#a3a3a3" stroke-width="1" stroke-linejoin="round"/>
 </svg>
</div>

</body></html>
